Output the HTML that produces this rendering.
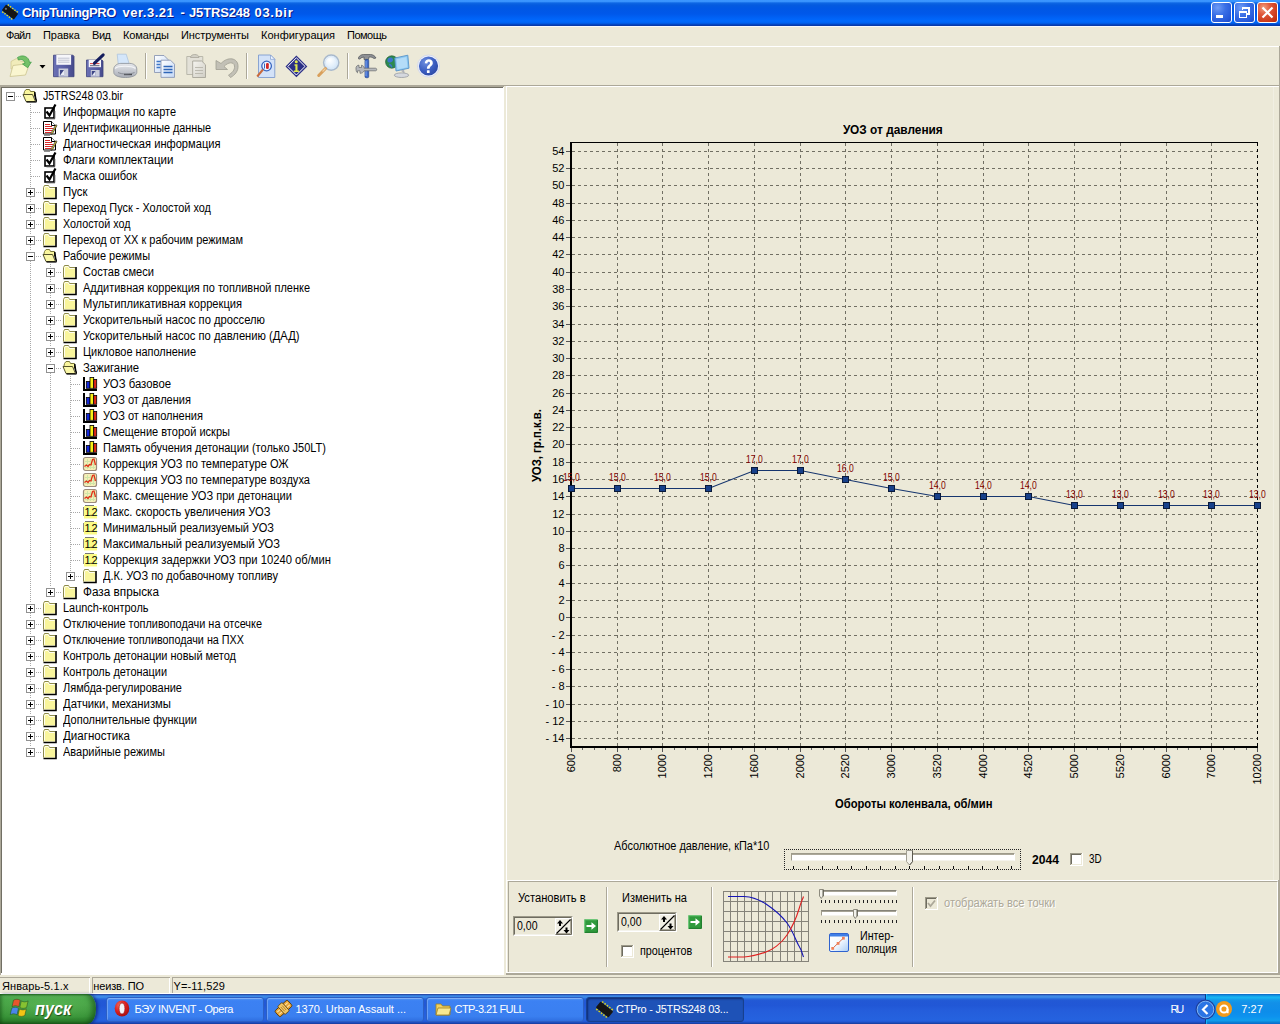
<!DOCTYPE html>
<html lang="ru"><head><meta charset="utf-8"><title>ChipTuningPRO ver.3.21 - J5TRS248 03.bir</title>
<style>
html,body{margin:0;padding:0;}
body{width:1280px;height:1024px;overflow:hidden;background:#ECE9D8;position:relative;font:11px "Liberation Sans",sans-serif;color:#000;}
.t{position:absolute;white-space:pre;line-height:14px;transform-origin:0 50%;}
.a{position:absolute;}
svg{position:absolute;overflow:visible;}
</style></head><body>
<div class="a" style="left:0;top:0;width:1280px;height:26px;background:linear-gradient(to bottom,#3b97ff 0,#3893fd 1.500px,#0d67e4 3px,#045bdf 5px,#0057e4 8px,#0058ea 14px,#0062f6 18px,#0069fd 21px,#0062f0 23px,#0346c4 24.500px,#0a349c 26px);"></div>
<svg style="left:2px;top:4px" width="16" height="16" viewBox="0 0 20 20">
<g transform="rotate(38 10 10)">
<g fill="#e6d820"><rect x="2" y="3.5" width="2" height="2"/><rect x="5.5" y="3.5" width="2" height="2"/><rect x="9" y="3.5" width="2" height="2"/><rect x="12.5" y="3.5" width="2" height="2"/><rect x="16" y="3.5" width="2" height="2"/>
<rect x="2" y="14.5" width="2" height="2"/><rect x="5.5" y="14.5" width="2" height="2"/><rect x="9" y="14.5" width="2" height="2"/><rect x="12.5" y="14.5" width="2" height="2"/><rect x="16" y="14.5" width="2" height="2"/></g>
<rect x="0.5" y="5.5" width="19" height="9" rx="1" fill="#151515"/>
<circle cx="3.5" cy="10" r="1.3" fill="#777"/></g></svg>
<span class="t" style="left:22px;top:6px;font:normal bold 13px/14px 'Liberation Sans', sans-serif;color:#fff;letter-spacing:-0.426px;text-shadow:1px 1px 0 #0a1883;">ChipTuningPRO </span>
<span class="t" style="left:122.5px;top:6px;font:normal bold 13px/14px 'Liberation Sans', sans-serif;color:#fff;letter-spacing:0.497px;text-shadow:1px 1px 0 #0a1883;">ver.3.21 </span>
<span class="t" style="left:180.5px;top:6px;font:normal bold 13px/14px 'Liberation Sans', sans-serif;color:#fff;text-shadow:1px 1px 0 #0a1883;">- </span>
<span class="t" style="left:189px;top:6px;font:normal bold 13px/14px 'Liberation Sans', sans-serif;color:#fff;letter-spacing:-0.165px;text-shadow:1px 1px 0 #0a1883;">J5TRS248 </span>
<span class="t" style="left:254.5px;top:6px;font:normal bold 13px/14px 'Liberation Sans', sans-serif;color:#fff;letter-spacing:0.702px;text-shadow:1px 1px 0 #0a1883;">03.bir</span>
<div class="a" style="left:1211px;top:2px;width:19px;height:19px;border:1px solid #fff;border-radius:3px;background:radial-gradient(circle at 30% 25%,#6f9cf5 0%,#3a6fe6 40%,#2456d8 80%,#1b46c2 100%);"></div>
<div class="a" style="left:1234px;top:2px;width:19px;height:19px;border:1px solid #fff;border-radius:3px;background:radial-gradient(circle at 30% 25%,#6f9cf5 0%,#3a6fe6 40%,#2456d8 80%,#1b46c2 100%);"></div>
<div class="a" style="left:1257px;top:2px;width:19px;height:19px;border:1px solid #fff;border-radius:3px;background:radial-gradient(circle at 30% 25%,#f0a080 0%,#e0573a 35%,#c73515 80%,#b02a0c 100%);"></div>
<div class="a" style="left:1216px;top:15px;width:7px;height:3px;background:#fff;"></div>
<svg style="left:1234px;top:2px" width="21" height="21" viewBox="0 0 21 21" fill="none" stroke="#fff" stroke-width="1.200" shape-rendering="crispEdges">
<path d="M8.500 8V5.500h6.500V12H13"/><path d="M8 6h7" stroke-width="1.600"/><rect x="5.500" y="9.500" width="7" height="6"/><path d="M5 9.500h8" stroke-width="2"/></svg>
<svg style="left:1257px;top:2px" width="21" height="21" viewBox="0 0 21 21" stroke="#fff" stroke-width="2.2" stroke-linecap="butt"><path d="M5.5 5.5l10 10M15.5 5.5l-10 10"/></svg>
<div class="a" style="left:0;top:26px;width:1280px;height:1px;background:#f6f8fc;"></div>
<span class="t" style="left:6px;top:28px;font:normal normal 11px/14px 'Liberation Sans', sans-serif;color:#000;letter-spacing:-0.682px;">Файл</span>
<span class="t" style="left:43px;top:28px;font:normal normal 11px/14px 'Liberation Sans', sans-serif;color:#000;letter-spacing:-0.034px;">Правка</span>
<span class="t" style="left:92px;top:28px;font:normal normal 11px/14px 'Liberation Sans', sans-serif;color:#000;letter-spacing:-0.453px;">Вид</span>
<span class="t" style="left:123px;top:28px;font:normal normal 11px/14px 'Liberation Sans', sans-serif;color:#000;letter-spacing:-0.102px;">Команды</span>
<span class="t" style="left:181px;top:28px;font:normal normal 11px/14px 'Liberation Sans', sans-serif;color:#000;letter-spacing:-0.059px;">Инструменты</span>
<span class="t" style="left:261px;top:28px;font:normal normal 11px/14px 'Liberation Sans', sans-serif;color:#000;letter-spacing:0.016px;">Конфигурация</span>
<span class="t" style="left:347px;top:28px;font:normal normal 11px/14px 'Liberation Sans', sans-serif;color:#000;letter-spacing:-0.500px;">Помощь</span>
<div class="a" style="left:0;top:46px;width:1279px;height:1px;background:#fff;"></div>
<div class="a" style="left:1279px;top:46px;width:1px;height:928px;background:#aca899;"></div>
<div class="a" style="left:0;top:85px;width:1280px;height:1px;background:#aca899;"></div>
<div class="a" style="left:506px;top:86px;width:773px;height:1px;background:#fff;"></div>
<div class="a" style="left:145px;top:53px;width:1px;height:26px;background:#aca899;"></div><div class="a" style="left:146px;top:53px;width:1px;height:26px;background:#fff;"></div>
<div class="a" style="left:246px;top:53px;width:1px;height:26px;background:#aca899;"></div><div class="a" style="left:247px;top:53px;width:1px;height:26px;background:#fff;"></div>
<div class="a" style="left:347px;top:53px;width:1px;height:26px;background:#aca899;"></div><div class="a" style="left:348px;top:53px;width:1px;height:26px;background:#fff;"></div>
<svg style="left:0;top:0" width="450" height="90" viewBox="0 0 450 90">
<defs>
<linearGradient id="gdoc" x1="0" y1="0" x2="1" y2="1"><stop offset="0" stop-color="#fff"/><stop offset="1" stop-color="#c4d8f6"/></linearGradient>
<linearGradient id="gdocg" x1="0" y1="0" x2="1" y2="1"><stop offset="0" stop-color="#f6f5f0"/><stop offset="1" stop-color="#cfcdc4"/></linearGradient>
<linearGradient id="gfl" x1="0" y1="0" x2="1" y2="0"><stop offset="0" stop-color="#6a70b4"/><stop offset=".5" stop-color="#5a5fa6"/><stop offset="1" stop-color="#474b8c"/></linearGradient>
<radialGradient id="ghelp" cx=".35" cy=".3" r=".8"><stop offset="0" stop-color="#6e8fe0"/><stop offset=".6" stop-color="#3a5cc0"/><stop offset="1" stop-color="#2a46a0"/></radialGradient>
<radialGradient id="glens" cx=".4" cy=".35" r=".7"><stop offset="0" stop-color="#fff"/><stop offset="1" stop-color="#cfe4f8"/></radialGradient>
<linearGradient id="gprn" x1="0" y1="0" x2="0" y2="1"><stop offset="0" stop-color="#e6e8ec"/><stop offset="1" stop-color="#a9adb6"/></linearGradient>
</defs>
<!-- open -->
<path d="M11 61.500L16.500 58.500 20.500 61l5.500 1v5l-15 2z" fill="#f1ecba" stroke="#d2ca94" stroke-width=".8"/>
<path d="M10 76.500L13 65.500l16.500-2L25.500 75z" fill="#faf6d0" stroke="#cbc48e" stroke-width=".8"/>
<path d="M17.500 57.500C22.500 54 29 56.500 29.500 62.500l1.800-.5-3.600 5.700-5.200-3.700 2.500-.7c-.5-3.300-4-4.800-6.500-3.300z" fill="#74c168" stroke="#43a04a" stroke-width=".8"/>
<path d="M39.500 65h6l-3 3.500z" fill="#000"/>
<!-- save -->
<path d="M53.500 55.200h19.500l1 1v20.500H53.500z" fill="url(#gfl)" stroke="#3e427e" stroke-width=".8"/>
<rect x="56.300" y="55" width="14.800" height="9.800" fill="#f6f6fa"/><path d="M58 58.200h11.500M58 60.200h11.500M58 62.200h11.500" stroke="#b4b6c6" stroke-width=".8"/>
<rect x="58.600" y="68.500" width="9.600" height="8.200" fill="#c9ccdb"/><rect x="60" y="70" width="4" height="5.500" fill="#3e4686"/><path d="M60 75.500l4-5.500v5.500z" fill="#e8ebf5"/>
<!-- save as -->
<path d="M86.500 60h15.500l1 1v15.700H86.500z" fill="url(#gfl)" stroke="#3e427e" stroke-width=".8"/>
<rect x="88.700" y="59.800" width="12.300" height="7.400" fill="#f6f6fa"/><path d="M90 63.600h9.500" stroke="#d43c3c" stroke-width="1"/><path d="M90 65.700h9.500" stroke="#4a4a68" stroke-width=".9"/>
<rect x="90.800" y="70" width="8.800" height="6.700" fill="#c9ccdb"/><rect x="91.800" y="71" width="3.700" height="4.700" fill="#3e4686"/><path d="M91.800 75.700l3.700-4.700v4.700z" fill="#e8ebf5"/>
<path d="M94.500 63.200L103.200 54.800" stroke="#141c5c" stroke-width="3" stroke-linecap="round"/><path d="M93.200 64.800l2.300-.6-1.600-1.600z" fill="#141c5c"/>
<!-- print -->
<path d="M117.200 54.200h9l3 9.600h-11z" fill="#d4e6fa" stroke="#a8c0dc" stroke-width=".7"/>
<path d="M113.800 69c0-3.500 4-5.600 7-5.600h9c4 0 7 2.600 7 5.600v3.500c0 3-5 5-11.500 5s-11.500-2-11.500-5z" fill="url(#gprn)" stroke="#8c9098" stroke-width=".8"/>
<path d="M115 68.500c3-3 17-3 20.500 0" fill="none" stroke="#f4f5f7" stroke-width="1.200"/>
<path d="M124 74.500h8" stroke="#4a4c52" stroke-width="1.400"/><path d="M118 72.500c4 2 12 2 16.500 0" fill="none" stroke="#7c8088" stroke-width=".8"/>
<!-- copy -->
<path d="M154.500 55.500h9.500l4 4v13h-13.500z" fill="url(#gdoc)" stroke="#8c98b4" stroke-width=".9"/><path d="M156.500 61.500h5M156.500 64.500h4M156.500 67.500h4" stroke="#3f78c8" stroke-width="1.400"/>
<path d="M161 60.200h9.500l4 4v13.200H161z" fill="url(#gdoc)" stroke="#8c98b4" stroke-width=".9"/><path d="M163.500 66.500h9M163.500 69.500h9M163.500 72.500h9" stroke="#2f66b8" stroke-width="1.500"/>
<!-- paste -->
<path d="M186.800 56.500h16v18h-16z" fill="#e3e1d8" stroke="#b4b2a6" stroke-width=".9"/><path d="M190.500 57.500c0-4 8.500-4 8.500 0z" fill="#d2d0c6" stroke="#a8a69a" stroke-width=".8"/>
<path d="M192.700 61h9l3.800 3.800v12.700h-12.800z" fill="url(#gdocg)" stroke="#a6a498" stroke-width=".9"/><path d="M195 67.500h8M195 70.500h8M195 73.500h8" stroke="#bcbab0" stroke-width="1.200"/>
<!-- undo -->
<path d="M216 60.500v9h11.500l-3.500-3c4-4.500 10-5 10.500-.5.500 4-2.500 7-6 9l2 2.500c4.500-2.500 8-6.500 7.500-12-.5-7.500-10-9.500-17-2z" fill="#c2c0b6" stroke="#a09e92" stroke-width=".8"/>
<!-- preview -->
<path d="M258.500 55h12l4.300 4.300v18.200h-16.300z" fill="#d3e2f8" stroke="#7f9ccf" stroke-width=".9"/><path d="M270.500 55v4.300h4.300z" fill="#f4f8ff" stroke="#7f9ccf" stroke-width=".7"/>
<circle cx="266.600" cy="66" r="4.800" fill="#f1f6ff" stroke="#3866c0" stroke-width="1.300"/><rect x="266" y="63" width="2.800" height="6" rx="1.200" fill="#d22a2a"/><path d="M264.500 63.500v5" stroke="#3866c0" stroke-width="1"/>
<path d="M263 69.500l-5.800 7" stroke="#c96a3c" stroke-width="2"/>
<!-- info -->
<path d="M296.400 55.500l10.900 10.900-10.900 10.900-10.900-10.900z" fill="#2b2f86"/><path d="M296.400 57.800l8.600 8.600-8.600 8.600-8.600-8.600z" fill="none" stroke="#fff" stroke-width="1"/>
<circle cx="296.300" cy="61.800" r="1.500" fill="#dfe84c"/><path d="M294.500 64.300h3v6.200h1.400v1.500h-5v-1.500h1.500v-4.700h-.9z" fill="#dfe84c"/>
<!-- find -->
<circle cx="331.200" cy="62.600" r="7.600" fill="url(#glens)" stroke="#a9b9cc" stroke-width="1.500"/><circle cx="331.200" cy="62.600" r="6" fill="none" stroke="#d8e8f8" stroke-width="1"/>
<path d="M325.500 68.500l-6.800 7" stroke="#d9a05c" stroke-width="3" stroke-linecap="round"/><path d="M325.500 68.500l-3 3" stroke="#f0cfa0" stroke-width="1.200"/>
<!-- tools -->
<path d="M358.500 57.500c1-2 3-3 5-3h7c2.500 0 4.500 1.500 5.500 3.500l-2 .5c-1.500-1.200-3-1.500-5-1.500l-.5 2.500h-4.500v-2.500l-3 .8c-.5 1.500-1.500 1.500-2.500 1z" fill="#8e9094" stroke="#4e5054" stroke-width=".7"/>
<rect x="365" y="59.500" width="3.700" height="18.200" rx="1.200" fill="#3f6ccc" stroke="#27468c" stroke-width=".7"/><path d="M366 61v15" stroke="#86aaf0" stroke-width=".9"/>
<path d="M356 69c-.5-2.500 1.500-4 3-3.800v2.300h2.500v-2.300c2 .3 2.800 2 2.500 3h11.500c1.600 0 1.600 2.600 0 2.600H364c-.5 1.500-2 2.500-4 2.500v-2.500h-2.500v2c-1-.5-1.500-2-1.500-3.800z" fill="#b6b8bc" stroke="#66686c" stroke-width=".7"/>
<!-- network -->
<circle cx="391.800" cy="62" r="6.200" fill="#2c8a50" stroke="#1c5c34" stroke-width=".7"/><path d="M388 58.500c2-1.500 4.500-1 5 .8s-1.500 3.500-3.500 3.300-2.800-2.200-1.500-4.100z" fill="#3c74cc"/><path d="M389 64.500c1.500 0 3 1.500 2.500 3" stroke="#3c74cc" stroke-width="1.500" fill="none"/>
<path d="M394.800 58l13-2.800 1.200 13-13 2.800z" fill="#8cc9f2" stroke="#5a94c8" stroke-width=".9"/><path d="M396.500 59.300l10-2.200.9 10.200-10 2.200z" fill="#b4dcf8"/>
<path d="M400.500 70.500l3.500-.8.800 4z" fill="#aeb2ba"/><ellipse cx="401.500" cy="75.200" rx="7.200" ry="2.300" fill="#d5d8de" stroke="#8d9199" stroke-width=".7"/>
<!-- help -->
<circle cx="428.500" cy="66" r="11" fill="#eef1fa" stroke="#cdd3ea" stroke-width=".8"/><circle cx="428.500" cy="66" r="9.600" fill="url(#ghelp)"/>
<path d="M424.800 63.300c0-5.300 8-5.300 8-.3 0 3-3.200 3.200-3.200 5.800h-2.700c0-3.600 3.100-3.800 3.100-5.700 0-1.800-2.700-1.800-2.700.4z" fill="#fff"/><rect x="426.900" y="70.200" width="2.700" height="2.700" rx=".5" fill="#fff"/>
</svg>
<div class="a" style="left:0;top:86px;width:504px;height:889px;background:#fff;border-left:1px solid #aca899;border-top:1px solid #aca899;box-sizing:border-box;"></div>
<div class="a" style="left:1px;top:87px;width:502px;height:1px;background:#716f64;"></div><div class="a" style="left:1px;top:87px;width:1px;height:886px;background:#716f64;"></div>
<svg width="0" height="0" style="left:0;top:0"><defs>
<symbol id="fc" viewBox="0 0 16 16"><path d="M1.500 3.500l1-2h4l1 2h6v10h-12z" fill="#f9f59c"/><path d="M1.500 13.500v-10l1-2h4l1 2h5.500" fill="none" stroke="#8c8a4c" stroke-width="1"/><path d="M2.500 12.500v-8.500l.7-1.500h3l1 2h5.300" fill="none" stroke="#fffef0" stroke-width="1"/><path d="M14 3v11.500H1.500" fill="none" stroke="#000" stroke-width="1.600"/></symbol>
<symbol id="fo" viewBox="0 0 16 16"><path d="M1.500 8l1-4.500 1.500-2h3.500l1 2h4v4.500" fill="#f9f59c" stroke="#7a783c" stroke-width="1"/><path d="M1 6.500h9.500l3 7H4z" fill="#fbf8a8" stroke="#55532c" stroke-width="1"/><path d="M12.800 4v4.500l1.700 5z" fill="#000" stroke="#000" stroke-width="1"/><path d="M4.500 14h10" stroke="#000" stroke-width="1.200"/></symbol>
<symbol id="ck" viewBox="0 0 16 16"><rect x="3" y="4" width="9" height="10" fill="#fff" stroke="#000" stroke-width="1.600"/><path d="M13 14.800H4.500M12.800 14.500V7" stroke="#555" stroke-width="1"/><path d="M4.500 7.500l3 4L13.500.5" fill="none" stroke="#000" stroke-width="2.200"/></symbol>
<symbol id="dc" viewBox="0 0 16 16"><path d="M1.500 1.500h8l4 4v8.500h-12z" fill="#fff" stroke="#000" stroke-width="1"/><path d="M9.500 1.500v4h4" fill="#fff" stroke="#000" stroke-width="1"/><path d="M3 4.500h5M3 6.500h7M3 8.500h8M3 10.500h7M3 12.500h6" stroke="#d62a2a" stroke-width="1.100"/><path d="M15 5.500l-4.500 8-1.500 1 .3-1.800 4.500-8z" fill="#f0d83c" stroke="#222" stroke-width=".7"/><path d="M2.500 15.500h6" stroke="#222" stroke-width="1" stroke-dasharray="1,1"/></symbol>
<symbol id="br" viewBox="0 0 16 16"><path d="M2 1v13h13" fill="none" stroke="#000" stroke-width="2"/><path d="M3.500 2v10.500h11.500" fill="none" stroke="#fff" stroke-width="1"/><rect x="4.300" y="5.500" width="3.700" height="6.800" fill="#1428d8" stroke="#000" stroke-width=".8"/><rect x="8" y="1.500" width="3.700" height="10.800" fill="#f8f018" stroke="#000" stroke-width=".8"/><rect x="11.700" y="3.500" width="3" height="8.800" fill="#e02818" stroke="#000" stroke-width=".8"/></symbol>
<symbol id="gr" viewBox="0 0 16 16"><rect x="1.500" y="1.500" width="13" height="13" rx="2" fill="#f6efb8" stroke="#9c8c7c" stroke-width="1.200"/><path d="M3 5.500h10M3 8.500h10M3 11.500h10M5.500 3v10M8.500 3v10M11.500 3v10" stroke="#cfe6a8" stroke-width="1"/><path d="M2.500 10.500l2-1.500 1.500 1.500 1.500-2 1.500.5 1.500-5.500 1.500-.5 1.500 6" fill="none" stroke="#e03018" stroke-width="1.300"/></symbol>
<symbol id="nm" viewBox="0 0 16 16"><rect x="2" y="2" width="13" height="12.500" fill="#fbfb86"/><path d="M3 1.500h9" stroke="#777" stroke-width="1"/><path d="M1.500 3v9" stroke="#888" stroke-width="1"/></symbol>
</defs></svg>
<div class="a" style="left:16px;top:96px;width:5px;height:1px;background:repeating-linear-gradient(to right,#a8a8a8 0 1px,transparent 1px 2px);"></div>
<svg style="left:22px;top:88px" width="16" height="16"><use href="#fo"/></svg>
<div class="a" style="left:6px;top:92px;width:7px;height:7px;border:1px solid #919191;background:#fff;"></div>
<div class="a" style="left:8px;top:96px;width:5px;height:1px;background:#000;"></div>
<span class="t" style="left:43px;top:89px;font:normal normal 12px/14px 'Liberation Sans', sans-serif;color:#000;transform:scaleX(0.8884);">J5TRS248 03.bir</span>
<div class="a" style="left:31px;top:112px;width:10px;height:1px;background:repeating-linear-gradient(to right,#a8a8a8 0 1px,transparent 1px 2px);"></div>
<svg style="left:42px;top:104px" width="16" height="16"><use href="#ck"/></svg>
<span class="t" style="left:63px;top:105px;font:normal normal 12px/14px 'Liberation Sans', sans-serif;color:#000;transform:scaleX(0.9116);">Информация по карте</span>
<div class="a" style="left:31px;top:128px;width:10px;height:1px;background:repeating-linear-gradient(to right,#a8a8a8 0 1px,transparent 1px 2px);"></div>
<svg style="left:42px;top:120px" width="16" height="16"><use href="#dc"/></svg>
<span class="t" style="left:63px;top:121px;font:normal normal 12px/14px 'Liberation Sans', sans-serif;color:#000;transform:scaleX(0.9010);">Идентификационные данные</span>
<div class="a" style="left:31px;top:144px;width:10px;height:1px;background:repeating-linear-gradient(to right,#a8a8a8 0 1px,transparent 1px 2px);"></div>
<svg style="left:42px;top:136px" width="16" height="16"><use href="#dc"/></svg>
<span class="t" style="left:63px;top:137px;font:normal normal 12px/14px 'Liberation Sans', sans-serif;color:#000;transform:scaleX(0.9272);">Диагностическая информация</span>
<div class="a" style="left:31px;top:160px;width:10px;height:1px;background:repeating-linear-gradient(to right,#a8a8a8 0 1px,transparent 1px 2px);"></div>
<svg style="left:42px;top:152px" width="16" height="16"><use href="#ck"/></svg>
<span class="t" style="left:63px;top:153px;font:normal normal 12px/14px 'Liberation Sans', sans-serif;color:#000;transform:scaleX(0.9609);">Флаги комплектации</span>
<div class="a" style="left:31px;top:176px;width:10px;height:1px;background:repeating-linear-gradient(to right,#a8a8a8 0 1px,transparent 1px 2px);"></div>
<svg style="left:42px;top:168px" width="16" height="16"><use href="#ck"/></svg>
<span class="t" style="left:63px;top:169px;font:normal normal 12px/14px 'Liberation Sans', sans-serif;color:#000;transform:scaleX(0.9234);">Маска ошибок</span>
<div class="a" style="left:36px;top:192px;width:5px;height:1px;background:repeating-linear-gradient(to right,#a8a8a8 0 1px,transparent 1px 2px);"></div>
<svg style="left:42px;top:184px" width="16" height="16"><use href="#fc"/></svg>
<div class="a" style="left:26px;top:188px;width:7px;height:7px;border:1px solid #919191;background:#fff;"></div>
<div class="a" style="left:28px;top:192px;width:5px;height:1px;background:#000;"></div>
<div class="a" style="left:30px;top:190px;width:1px;height:5px;background:#000;"></div>
<span class="t" style="left:63px;top:185px;font:normal normal 12px/14px 'Liberation Sans', sans-serif;color:#000;transform:scaleX(0.9515);">Пуск</span>
<div class="a" style="left:36px;top:208px;width:5px;height:1px;background:repeating-linear-gradient(to right,#a8a8a8 0 1px,transparent 1px 2px);"></div>
<svg style="left:42px;top:200px" width="16" height="16"><use href="#fc"/></svg>
<div class="a" style="left:26px;top:204px;width:7px;height:7px;border:1px solid #919191;background:#fff;"></div>
<div class="a" style="left:28px;top:208px;width:5px;height:1px;background:#000;"></div>
<div class="a" style="left:30px;top:206px;width:1px;height:5px;background:#000;"></div>
<span class="t" style="left:63px;top:201px;font:normal normal 12px/14px 'Liberation Sans', sans-serif;color:#000;transform:scaleX(0.9088);">Переход Пуск - Холостой ход</span>
<div class="a" style="left:36px;top:224px;width:5px;height:1px;background:repeating-linear-gradient(to right,#a8a8a8 0 1px,transparent 1px 2px);"></div>
<svg style="left:42px;top:216px" width="16" height="16"><use href="#fc"/></svg>
<div class="a" style="left:26px;top:220px;width:7px;height:7px;border:1px solid #919191;background:#fff;"></div>
<div class="a" style="left:28px;top:224px;width:5px;height:1px;background:#000;"></div>
<div class="a" style="left:30px;top:222px;width:1px;height:5px;background:#000;"></div>
<span class="t" style="left:63px;top:217px;font:normal normal 12px/14px 'Liberation Sans', sans-serif;color:#000;transform:scaleX(0.8946);">Холостой ход</span>
<div class="a" style="left:36px;top:240px;width:5px;height:1px;background:repeating-linear-gradient(to right,#a8a8a8 0 1px,transparent 1px 2px);"></div>
<svg style="left:42px;top:232px" width="16" height="16"><use href="#fc"/></svg>
<div class="a" style="left:26px;top:236px;width:7px;height:7px;border:1px solid #919191;background:#fff;"></div>
<div class="a" style="left:28px;top:240px;width:5px;height:1px;background:#000;"></div>
<div class="a" style="left:30px;top:238px;width:1px;height:5px;background:#000;"></div>
<span class="t" style="left:63px;top:233px;font:normal normal 12px/14px 'Liberation Sans', sans-serif;color:#000;transform:scaleX(0.9162);">Переход от ХХ к рабочим режимам</span>
<div class="a" style="left:36px;top:256px;width:5px;height:1px;background:repeating-linear-gradient(to right,#a8a8a8 0 1px,transparent 1px 2px);"></div>
<svg style="left:42px;top:248px" width="16" height="16"><use href="#fo"/></svg>
<div class="a" style="left:26px;top:252px;width:7px;height:7px;border:1px solid #919191;background:#fff;"></div>
<div class="a" style="left:28px;top:256px;width:5px;height:1px;background:#000;"></div>
<span class="t" style="left:63px;top:249px;font:normal normal 12px/14px 'Liberation Sans', sans-serif;color:#000;transform:scaleX(0.9125);">Рабочие режимы</span>
<div class="a" style="left:56px;top:272px;width:5px;height:1px;background:repeating-linear-gradient(to right,#a8a8a8 0 1px,transparent 1px 2px);"></div>
<svg style="left:62px;top:264px" width="16" height="16"><use href="#fc"/></svg>
<div class="a" style="left:46px;top:268px;width:7px;height:7px;border:1px solid #919191;background:#fff;"></div>
<div class="a" style="left:48px;top:272px;width:5px;height:1px;background:#000;"></div>
<div class="a" style="left:50px;top:270px;width:1px;height:5px;background:#000;"></div>
<span class="t" style="left:83px;top:265px;font:normal normal 12px/14px 'Liberation Sans', sans-serif;color:#000;transform:scaleX(0.9255);">Состав смеси</span>
<div class="a" style="left:56px;top:288px;width:5px;height:1px;background:repeating-linear-gradient(to right,#a8a8a8 0 1px,transparent 1px 2px);"></div>
<svg style="left:62px;top:280px" width="16" height="16"><use href="#fc"/></svg>
<div class="a" style="left:46px;top:284px;width:7px;height:7px;border:1px solid #919191;background:#fff;"></div>
<div class="a" style="left:48px;top:288px;width:5px;height:1px;background:#000;"></div>
<div class="a" style="left:50px;top:286px;width:1px;height:5px;background:#000;"></div>
<span class="t" style="left:83px;top:281px;font:normal normal 12px/14px 'Liberation Sans', sans-serif;color:#000;transform:scaleX(0.9135);">Аддитивная коррекция по топливной пленке</span>
<div class="a" style="left:56px;top:304px;width:5px;height:1px;background:repeating-linear-gradient(to right,#a8a8a8 0 1px,transparent 1px 2px);"></div>
<svg style="left:62px;top:296px" width="16" height="16"><use href="#fc"/></svg>
<div class="a" style="left:46px;top:300px;width:7px;height:7px;border:1px solid #919191;background:#fff;"></div>
<div class="a" style="left:48px;top:304px;width:5px;height:1px;background:#000;"></div>
<div class="a" style="left:50px;top:302px;width:1px;height:5px;background:#000;"></div>
<span class="t" style="left:83px;top:297px;font:normal normal 12px/14px 'Liberation Sans', sans-serif;color:#000;transform:scaleX(0.9264);">Мультипликативная коррекция</span>
<div class="a" style="left:56px;top:320px;width:5px;height:1px;background:repeating-linear-gradient(to right,#a8a8a8 0 1px,transparent 1px 2px);"></div>
<svg style="left:62px;top:312px" width="16" height="16"><use href="#fc"/></svg>
<div class="a" style="left:46px;top:316px;width:7px;height:7px;border:1px solid #919191;background:#fff;"></div>
<div class="a" style="left:48px;top:320px;width:5px;height:1px;background:#000;"></div>
<div class="a" style="left:50px;top:318px;width:1px;height:5px;background:#000;"></div>
<span class="t" style="left:83px;top:313px;font:normal normal 12px/14px 'Liberation Sans', sans-serif;color:#000;transform:scaleX(0.9333);">Ускорительный насос по дросселю</span>
<div class="a" style="left:56px;top:336px;width:5px;height:1px;background:repeating-linear-gradient(to right,#a8a8a8 0 1px,transparent 1px 2px);"></div>
<svg style="left:62px;top:328px" width="16" height="16"><use href="#fc"/></svg>
<div class="a" style="left:46px;top:332px;width:7px;height:7px;border:1px solid #919191;background:#fff;"></div>
<div class="a" style="left:48px;top:336px;width:5px;height:1px;background:#000;"></div>
<div class="a" style="left:50px;top:334px;width:1px;height:5px;background:#000;"></div>
<span class="t" style="left:83px;top:329px;font:normal normal 12px/14px 'Liberation Sans', sans-serif;color:#000;transform:scaleX(0.9326);">Ускорительный насос по давлению (ДАД)</span>
<div class="a" style="left:56px;top:352px;width:5px;height:1px;background:repeating-linear-gradient(to right,#a8a8a8 0 1px,transparent 1px 2px);"></div>
<svg style="left:62px;top:344px" width="16" height="16"><use href="#fc"/></svg>
<div class="a" style="left:46px;top:348px;width:7px;height:7px;border:1px solid #919191;background:#fff;"></div>
<div class="a" style="left:48px;top:352px;width:5px;height:1px;background:#000;"></div>
<div class="a" style="left:50px;top:350px;width:1px;height:5px;background:#000;"></div>
<span class="t" style="left:83px;top:345px;font:normal normal 12px/14px 'Liberation Sans', sans-serif;color:#000;transform:scaleX(0.9097);">Цикловое наполнение</span>
<div class="a" style="left:56px;top:368px;width:5px;height:1px;background:repeating-linear-gradient(to right,#a8a8a8 0 1px,transparent 1px 2px);"></div>
<svg style="left:62px;top:360px" width="16" height="16"><use href="#fo"/></svg>
<div class="a" style="left:46px;top:364px;width:7px;height:7px;border:1px solid #919191;background:#fff;"></div>
<div class="a" style="left:48px;top:368px;width:5px;height:1px;background:#000;"></div>
<span class="t" style="left:83px;top:361px;font:normal normal 12px/14px 'Liberation Sans', sans-serif;color:#000;transform:scaleX(0.9419);">Зажигание</span>
<div class="a" style="left:71px;top:384px;width:10px;height:1px;background:repeating-linear-gradient(to right,#a8a8a8 0 1px,transparent 1px 2px);"></div>
<svg style="left:82px;top:376px" width="16" height="16"><use href="#br"/></svg>
<span class="t" style="left:103px;top:377px;font:normal normal 12px/14px 'Liberation Sans', sans-serif;color:#000;transform:scaleX(0.9457);">УОЗ базовое</span>
<div class="a" style="left:71px;top:400px;width:10px;height:1px;background:repeating-linear-gradient(to right,#a8a8a8 0 1px,transparent 1px 2px);"></div>
<svg style="left:82px;top:392px" width="16" height="16"><use href="#br"/></svg>
<span class="t" style="left:103px;top:393px;font:normal normal 12px/14px 'Liberation Sans', sans-serif;color:#000;transform:scaleX(0.9198);">УОЗ от давления</span>
<div class="a" style="left:71px;top:416px;width:10px;height:1px;background:repeating-linear-gradient(to right,#a8a8a8 0 1px,transparent 1px 2px);"></div>
<svg style="left:82px;top:408px" width="16" height="16"><use href="#br"/></svg>
<span class="t" style="left:103px;top:409px;font:normal normal 12px/14px 'Liberation Sans', sans-serif;color:#000;transform:scaleX(0.9197);">УОЗ от наполнения</span>
<div class="a" style="left:71px;top:432px;width:10px;height:1px;background:repeating-linear-gradient(to right,#a8a8a8 0 1px,transparent 1px 2px);"></div>
<svg style="left:82px;top:424px" width="16" height="16"><use href="#br"/></svg>
<span class="t" style="left:103px;top:425px;font:normal normal 12px/14px 'Liberation Sans', sans-serif;color:#000;transform:scaleX(0.9195);">Смещение второй искры</span>
<div class="a" style="left:71px;top:448px;width:10px;height:1px;background:repeating-linear-gradient(to right,#a8a8a8 0 1px,transparent 1px 2px);"></div>
<svg style="left:82px;top:440px" width="16" height="16"><use href="#br"/></svg>
<span class="t" style="left:103px;top:441px;font:normal normal 12px/14px 'Liberation Sans', sans-serif;color:#000;transform:scaleX(0.9154);">Память обучения детонации (только J50LT)</span>
<div class="a" style="left:71px;top:464px;width:10px;height:1px;background:repeating-linear-gradient(to right,#a8a8a8 0 1px,transparent 1px 2px);"></div>
<svg style="left:82px;top:456px" width="16" height="16"><use href="#gr"/></svg>
<span class="t" style="left:103px;top:457px;font:normal normal 12px/14px 'Liberation Sans', sans-serif;color:#000;transform:scaleX(0.9235);">Коррекция УОЗ по температуре ОЖ</span>
<div class="a" style="left:71px;top:480px;width:10px;height:1px;background:repeating-linear-gradient(to right,#a8a8a8 0 1px,transparent 1px 2px);"></div>
<svg style="left:82px;top:472px" width="16" height="16"><use href="#gr"/></svg>
<span class="t" style="left:103px;top:473px;font:normal normal 12px/14px 'Liberation Sans', sans-serif;color:#000;transform:scaleX(0.9229);">Коррекция УОЗ по температуре воздуха</span>
<div class="a" style="left:71px;top:496px;width:10px;height:1px;background:repeating-linear-gradient(to right,#a8a8a8 0 1px,transparent 1px 2px);"></div>
<svg style="left:82px;top:488px" width="16" height="16"><use href="#gr"/></svg>
<span class="t" style="left:103px;top:489px;font:normal normal 12px/14px 'Liberation Sans', sans-serif;color:#000;transform:scaleX(0.9229);">Макс. смещение УОЗ при детонации</span>
<div class="a" style="left:71px;top:512px;width:10px;height:1px;background:repeating-linear-gradient(to right,#a8a8a8 0 1px,transparent 1px 2px);"></div>
<svg style="left:82px;top:504px" width="16" height="16"><use href="#nm"/></svg>
<span class="t" style="left:84.5px;top:505px;font:11px/14px 'Liberation Sans', sans-serif;letter-spacing:-1.100px;">1.2</span>
<span class="t" style="left:103px;top:505px;font:normal normal 12px/14px 'Liberation Sans', sans-serif;color:#000;transform:scaleX(0.9333);">Макс. скорость увеличения УОЗ</span>
<div class="a" style="left:71px;top:528px;width:10px;height:1px;background:repeating-linear-gradient(to right,#a8a8a8 0 1px,transparent 1px 2px);"></div>
<svg style="left:82px;top:520px" width="16" height="16"><use href="#nm"/></svg>
<span class="t" style="left:84.5px;top:521px;font:11px/14px 'Liberation Sans', sans-serif;letter-spacing:-1.100px;">1.2</span>
<span class="t" style="left:103px;top:521px;font:normal normal 12px/14px 'Liberation Sans', sans-serif;color:#000;transform:scaleX(0.9201);">Минимальный реализуемый УОЗ</span>
<div class="a" style="left:71px;top:544px;width:10px;height:1px;background:repeating-linear-gradient(to right,#a8a8a8 0 1px,transparent 1px 2px);"></div>
<svg style="left:82px;top:536px" width="16" height="16"><use href="#nm"/></svg>
<span class="t" style="left:84.5px;top:537px;font:11px/14px 'Liberation Sans', sans-serif;letter-spacing:-1.100px;">1.2</span>
<span class="t" style="left:103px;top:537px;font:normal normal 12px/14px 'Liberation Sans', sans-serif;color:#000;transform:scaleX(0.9281);">Максимальный реализуемый УОЗ</span>
<div class="a" style="left:71px;top:560px;width:10px;height:1px;background:repeating-linear-gradient(to right,#a8a8a8 0 1px,transparent 1px 2px);"></div>
<svg style="left:82px;top:552px" width="16" height="16"><use href="#nm"/></svg>
<span class="t" style="left:84.5px;top:553px;font:11px/14px 'Liberation Sans', sans-serif;letter-spacing:-1.100px;">1.2</span>
<span class="t" style="left:103px;top:553px;font:normal normal 12px/14px 'Liberation Sans', sans-serif;color:#000;transform:scaleX(0.9356);">Коррекция задержки УОЗ при 10240 об/мин</span>
<div class="a" style="left:76px;top:576px;width:5px;height:1px;background:repeating-linear-gradient(to right,#a8a8a8 0 1px,transparent 1px 2px);"></div>
<svg style="left:82px;top:568px" width="16" height="16"><use href="#fc"/></svg>
<div class="a" style="left:66px;top:572px;width:7px;height:7px;border:1px solid #919191;background:#fff;"></div>
<div class="a" style="left:68px;top:576px;width:5px;height:1px;background:#000;"></div>
<div class="a" style="left:70px;top:574px;width:1px;height:5px;background:#000;"></div>
<span class="t" style="left:103px;top:569px;font:normal normal 12px/14px 'Liberation Sans', sans-serif;color:#000;transform:scaleX(0.9211);">Д.К. УОЗ по добавочному топливу</span>
<div class="a" style="left:56px;top:592px;width:5px;height:1px;background:repeating-linear-gradient(to right,#a8a8a8 0 1px,transparent 1px 2px);"></div>
<svg style="left:62px;top:584px" width="16" height="16"><use href="#fc"/></svg>
<div class="a" style="left:46px;top:588px;width:7px;height:7px;border:1px solid #919191;background:#fff;"></div>
<div class="a" style="left:48px;top:592px;width:5px;height:1px;background:#000;"></div>
<div class="a" style="left:50px;top:590px;width:1px;height:5px;background:#000;"></div>
<span class="t" style="left:83px;top:585px;font:normal normal 12px/14px 'Liberation Sans', sans-serif;color:#000;transform:scaleX(0.9802);">Фаза впрыска</span>
<div class="a" style="left:36px;top:608px;width:5px;height:1px;background:repeating-linear-gradient(to right,#a8a8a8 0 1px,transparent 1px 2px);"></div>
<svg style="left:42px;top:600px" width="16" height="16"><use href="#fc"/></svg>
<div class="a" style="left:26px;top:604px;width:7px;height:7px;border:1px solid #919191;background:#fff;"></div>
<div class="a" style="left:28px;top:608px;width:5px;height:1px;background:#000;"></div>
<div class="a" style="left:30px;top:606px;width:1px;height:5px;background:#000;"></div>
<span class="t" style="left:63px;top:601px;font:normal normal 12px/14px 'Liberation Sans', sans-serif;color:#000;transform:scaleX(0.9106);">Launch-контроль</span>
<div class="a" style="left:36px;top:624px;width:5px;height:1px;background:repeating-linear-gradient(to right,#a8a8a8 0 1px,transparent 1px 2px);"></div>
<svg style="left:42px;top:616px" width="16" height="16"><use href="#fc"/></svg>
<div class="a" style="left:26px;top:620px;width:7px;height:7px;border:1px solid #919191;background:#fff;"></div>
<div class="a" style="left:28px;top:624px;width:5px;height:1px;background:#000;"></div>
<div class="a" style="left:30px;top:622px;width:1px;height:5px;background:#000;"></div>
<span class="t" style="left:63px;top:617px;font:normal normal 12px/14px 'Liberation Sans', sans-serif;color:#000;transform:scaleX(0.9087);">Отключение топливоподачи на отсечке</span>
<div class="a" style="left:36px;top:640px;width:5px;height:1px;background:repeating-linear-gradient(to right,#a8a8a8 0 1px,transparent 1px 2px);"></div>
<svg style="left:42px;top:632px" width="16" height="16"><use href="#fc"/></svg>
<div class="a" style="left:26px;top:636px;width:7px;height:7px;border:1px solid #919191;background:#fff;"></div>
<div class="a" style="left:28px;top:640px;width:5px;height:1px;background:#000;"></div>
<div class="a" style="left:30px;top:638px;width:1px;height:5px;background:#000;"></div>
<span class="t" style="left:63px;top:633px;font:normal normal 12px/14px 'Liberation Sans', sans-serif;color:#000;transform:scaleX(0.8994);">Отключение топливоподачи на ПХХ</span>
<div class="a" style="left:36px;top:656px;width:5px;height:1px;background:repeating-linear-gradient(to right,#a8a8a8 0 1px,transparent 1px 2px);"></div>
<svg style="left:42px;top:648px" width="16" height="16"><use href="#fc"/></svg>
<div class="a" style="left:26px;top:652px;width:7px;height:7px;border:1px solid #919191;background:#fff;"></div>
<div class="a" style="left:28px;top:656px;width:5px;height:1px;background:#000;"></div>
<div class="a" style="left:30px;top:654px;width:1px;height:5px;background:#000;"></div>
<span class="t" style="left:63px;top:649px;font:normal normal 12px/14px 'Liberation Sans', sans-serif;color:#000;transform:scaleX(0.9138);">Контроль детонации новый метод</span>
<div class="a" style="left:36px;top:672px;width:5px;height:1px;background:repeating-linear-gradient(to right,#a8a8a8 0 1px,transparent 1px 2px);"></div>
<svg style="left:42px;top:664px" width="16" height="16"><use href="#fc"/></svg>
<div class="a" style="left:26px;top:668px;width:7px;height:7px;border:1px solid #919191;background:#fff;"></div>
<div class="a" style="left:28px;top:672px;width:5px;height:1px;background:#000;"></div>
<div class="a" style="left:30px;top:670px;width:1px;height:5px;background:#000;"></div>
<span class="t" style="left:63px;top:665px;font:normal normal 12px/14px 'Liberation Sans', sans-serif;color:#000;transform:scaleX(0.9094);">Контроль детонации</span>
<div class="a" style="left:36px;top:688px;width:5px;height:1px;background:repeating-linear-gradient(to right,#a8a8a8 0 1px,transparent 1px 2px);"></div>
<svg style="left:42px;top:680px" width="16" height="16"><use href="#fc"/></svg>
<div class="a" style="left:26px;top:684px;width:7px;height:7px;border:1px solid #919191;background:#fff;"></div>
<div class="a" style="left:28px;top:688px;width:5px;height:1px;background:#000;"></div>
<div class="a" style="left:30px;top:686px;width:1px;height:5px;background:#000;"></div>
<span class="t" style="left:63px;top:681px;font:normal normal 12px/14px 'Liberation Sans', sans-serif;color:#000;transform:scaleX(0.9158);">Лямбда-регулирование</span>
<div class="a" style="left:36px;top:704px;width:5px;height:1px;background:repeating-linear-gradient(to right,#a8a8a8 0 1px,transparent 1px 2px);"></div>
<svg style="left:42px;top:696px" width="16" height="16"><use href="#fc"/></svg>
<div class="a" style="left:26px;top:700px;width:7px;height:7px;border:1px solid #919191;background:#fff;"></div>
<div class="a" style="left:28px;top:704px;width:5px;height:1px;background:#000;"></div>
<div class="a" style="left:30px;top:702px;width:1px;height:5px;background:#000;"></div>
<span class="t" style="left:63px;top:697px;font:normal normal 12px/14px 'Liberation Sans', sans-serif;color:#000;transform:scaleX(0.9431);">Датчики, механизмы</span>
<div class="a" style="left:36px;top:720px;width:5px;height:1px;background:repeating-linear-gradient(to right,#a8a8a8 0 1px,transparent 1px 2px);"></div>
<svg style="left:42px;top:712px" width="16" height="16"><use href="#fc"/></svg>
<div class="a" style="left:26px;top:716px;width:7px;height:7px;border:1px solid #919191;background:#fff;"></div>
<div class="a" style="left:28px;top:720px;width:5px;height:1px;background:#000;"></div>
<div class="a" style="left:30px;top:718px;width:1px;height:5px;background:#000;"></div>
<span class="t" style="left:63px;top:713px;font:normal normal 12px/14px 'Liberation Sans', sans-serif;color:#000;transform:scaleX(0.9163);">Дополнительные функции</span>
<div class="a" style="left:36px;top:736px;width:5px;height:1px;background:repeating-linear-gradient(to right,#a8a8a8 0 1px,transparent 1px 2px);"></div>
<svg style="left:42px;top:728px" width="16" height="16"><use href="#fc"/></svg>
<div class="a" style="left:26px;top:732px;width:7px;height:7px;border:1px solid #919191;background:#fff;"></div>
<div class="a" style="left:28px;top:736px;width:5px;height:1px;background:#000;"></div>
<div class="a" style="left:30px;top:734px;width:1px;height:5px;background:#000;"></div>
<span class="t" style="left:63px;top:729px;font:normal normal 12px/14px 'Liberation Sans', sans-serif;color:#000;transform:scaleX(0.9629);">Диагностика</span>
<div class="a" style="left:36px;top:752px;width:5px;height:1px;background:repeating-linear-gradient(to right,#a8a8a8 0 1px,transparent 1px 2px);"></div>
<svg style="left:42px;top:744px" width="16" height="16"><use href="#fc"/></svg>
<div class="a" style="left:26px;top:748px;width:7px;height:7px;border:1px solid #919191;background:#fff;"></div>
<div class="a" style="left:28px;top:752px;width:5px;height:1px;background:#000;"></div>
<div class="a" style="left:30px;top:750px;width:1px;height:5px;background:#000;"></div>
<span class="t" style="left:63px;top:745px;font:normal normal 12px/14px 'Liberation Sans', sans-serif;color:#000;transform:scaleX(0.9183);">Аварийные режимы</span>
<div class="a" style="left:30px;top:104px;width:1px;height:83px;background:repeating-linear-gradient(to bottom,#a8a8a8 0 1px,transparent 1px 2px);"></div>
<div class="a" style="left:30px;top:197px;width:1px;height:6px;background:repeating-linear-gradient(to bottom,#a8a8a8 0 1px,transparent 1px 2px);"></div>
<div class="a" style="left:30px;top:213px;width:1px;height:6px;background:repeating-linear-gradient(to bottom,#a8a8a8 0 1px,transparent 1px 2px);"></div>
<div class="a" style="left:30px;top:229px;width:1px;height:6px;background:repeating-linear-gradient(to bottom,#a8a8a8 0 1px,transparent 1px 2px);"></div>
<div class="a" style="left:30px;top:245px;width:1px;height:6px;background:repeating-linear-gradient(to bottom,#a8a8a8 0 1px,transparent 1px 2px);"></div>
<div class="a" style="left:30px;top:261px;width:1px;height:342px;background:repeating-linear-gradient(to bottom,#a8a8a8 0 1px,transparent 1px 2px);"></div>
<div class="a" style="left:30px;top:613px;width:1px;height:6px;background:repeating-linear-gradient(to bottom,#a8a8a8 0 1px,transparent 1px 2px);"></div>
<div class="a" style="left:30px;top:629px;width:1px;height:6px;background:repeating-linear-gradient(to bottom,#a8a8a8 0 1px,transparent 1px 2px);"></div>
<div class="a" style="left:30px;top:645px;width:1px;height:6px;background:repeating-linear-gradient(to bottom,#a8a8a8 0 1px,transparent 1px 2px);"></div>
<div class="a" style="left:30px;top:661px;width:1px;height:6px;background:repeating-linear-gradient(to bottom,#a8a8a8 0 1px,transparent 1px 2px);"></div>
<div class="a" style="left:30px;top:677px;width:1px;height:6px;background:repeating-linear-gradient(to bottom,#a8a8a8 0 1px,transparent 1px 2px);"></div>
<div class="a" style="left:30px;top:693px;width:1px;height:6px;background:repeating-linear-gradient(to bottom,#a8a8a8 0 1px,transparent 1px 2px);"></div>
<div class="a" style="left:30px;top:709px;width:1px;height:6px;background:repeating-linear-gradient(to bottom,#a8a8a8 0 1px,transparent 1px 2px);"></div>
<div class="a" style="left:30px;top:725px;width:1px;height:6px;background:repeating-linear-gradient(to bottom,#a8a8a8 0 1px,transparent 1px 2px);"></div>
<div class="a" style="left:30px;top:741px;width:1px;height:6px;background:repeating-linear-gradient(to bottom,#a8a8a8 0 1px,transparent 1px 2px);"></div>
<div class="a" style="left:50px;top:264px;width:1px;height:3px;background:repeating-linear-gradient(to bottom,#a8a8a8 0 1px,transparent 1px 2px);"></div>
<div class="a" style="left:50px;top:277px;width:1px;height:6px;background:repeating-linear-gradient(to bottom,#a8a8a8 0 1px,transparent 1px 2px);"></div>
<div class="a" style="left:50px;top:293px;width:1px;height:6px;background:repeating-linear-gradient(to bottom,#a8a8a8 0 1px,transparent 1px 2px);"></div>
<div class="a" style="left:50px;top:309px;width:1px;height:6px;background:repeating-linear-gradient(to bottom,#a8a8a8 0 1px,transparent 1px 2px);"></div>
<div class="a" style="left:50px;top:325px;width:1px;height:6px;background:repeating-linear-gradient(to bottom,#a8a8a8 0 1px,transparent 1px 2px);"></div>
<div class="a" style="left:50px;top:341px;width:1px;height:6px;background:repeating-linear-gradient(to bottom,#a8a8a8 0 1px,transparent 1px 2px);"></div>
<div class="a" style="left:50px;top:357px;width:1px;height:6px;background:repeating-linear-gradient(to bottom,#a8a8a8 0 1px,transparent 1px 2px);"></div>
<div class="a" style="left:50px;top:373px;width:1px;height:214px;background:repeating-linear-gradient(to bottom,#a8a8a8 0 1px,transparent 1px 2px);"></div>
<div class="a" style="left:70px;top:376px;width:1px;height:195px;background:repeating-linear-gradient(to bottom,#a8a8a8 0 1px,transparent 1px 2px);"></div>
<div class="a" style="left:506px;top:87px;width:1px;height:886px;background:#fff;"></div>
<div class="a" style="left:1273px;top:87px;width:1px;height:793px;background:#f1efe3;"></div>
<svg style="left:0;top:0" width="1280" height="1024" viewBox="0 0 1280 1024" shape-rendering="crispEdges"><path d="M572 738.5 H1257" stroke="#716f63" stroke-width="1" stroke-dasharray="3,3" fill="none"/><path d="M566 738.5 H570" stroke="#555" stroke-width="1"/><path d="M572 721.5 H1257" stroke="#716f63" stroke-width="1" stroke-dasharray="3,3" fill="none"/><path d="M566 721.5 H570" stroke="#555" stroke-width="1"/><path d="M572 704.5 H1257" stroke="#716f63" stroke-width="1" stroke-dasharray="3,3" fill="none"/><path d="M566 704.5 H570" stroke="#555" stroke-width="1"/><path d="M572 686.5 H1257" stroke="#716f63" stroke-width="1" stroke-dasharray="3,3" fill="none"/><path d="M566 686.5 H570" stroke="#555" stroke-width="1"/><path d="M572 669.5 H1257" stroke="#716f63" stroke-width="1" stroke-dasharray="3,3" fill="none"/><path d="M566 669.5 H570" stroke="#555" stroke-width="1"/><path d="M572 652.5 H1257" stroke="#716f63" stroke-width="1" stroke-dasharray="3,3" fill="none"/><path d="M566 652.5 H570" stroke="#555" stroke-width="1"/><path d="M572 635.5 H1257" stroke="#716f63" stroke-width="1" stroke-dasharray="3,3" fill="none"/><path d="M566 635.5 H570" stroke="#555" stroke-width="1"/><path d="M572 617.5 H1257" stroke="#716f63" stroke-width="1" stroke-dasharray="3,3" fill="none"/><path d="M566 617.5 H570" stroke="#555" stroke-width="1"/><path d="M572 600.5 H1257" stroke="#716f63" stroke-width="1" stroke-dasharray="3,3" fill="none"/><path d="M566 600.5 H570" stroke="#555" stroke-width="1"/><path d="M572 583.5 H1257" stroke="#716f63" stroke-width="1" stroke-dasharray="3,3" fill="none"/><path d="M566 583.5 H570" stroke="#555" stroke-width="1"/><path d="M572 565.5 H1257" stroke="#716f63" stroke-width="1" stroke-dasharray="3,3" fill="none"/><path d="M566 565.5 H570" stroke="#555" stroke-width="1"/><path d="M572 548.5 H1257" stroke="#716f63" stroke-width="1" stroke-dasharray="3,3" fill="none"/><path d="M566 548.5 H570" stroke="#555" stroke-width="1"/><path d="M572 531.5 H1257" stroke="#716f63" stroke-width="1" stroke-dasharray="3,3" fill="none"/><path d="M566 531.5 H570" stroke="#555" stroke-width="1"/><path d="M572 514.5 H1257" stroke="#716f63" stroke-width="1" stroke-dasharray="3,3" fill="none"/><path d="M566 514.5 H570" stroke="#555" stroke-width="1"/><path d="M572 496.5 H1257" stroke="#716f63" stroke-width="1" stroke-dasharray="3,3" fill="none"/><path d="M566 496.5 H570" stroke="#555" stroke-width="1"/><path d="M572 479.5 H1257" stroke="#716f63" stroke-width="1" stroke-dasharray="3,3" fill="none"/><path d="M566 479.5 H570" stroke="#555" stroke-width="1"/><path d="M572 462.5 H1257" stroke="#716f63" stroke-width="1" stroke-dasharray="3,3" fill="none"/><path d="M566 462.5 H570" stroke="#555" stroke-width="1"/><path d="M572 444.5 H1257" stroke="#716f63" stroke-width="1" stroke-dasharray="3,3" fill="none"/><path d="M566 444.5 H570" stroke="#555" stroke-width="1"/><path d="M572 427.5 H1257" stroke="#716f63" stroke-width="1" stroke-dasharray="3,3" fill="none"/><path d="M566 427.5 H570" stroke="#555" stroke-width="1"/><path d="M572 410.5 H1257" stroke="#716f63" stroke-width="1" stroke-dasharray="3,3" fill="none"/><path d="M566 410.5 H570" stroke="#555" stroke-width="1"/><path d="M572 393.5 H1257" stroke="#716f63" stroke-width="1" stroke-dasharray="3,3" fill="none"/><path d="M566 393.5 H570" stroke="#555" stroke-width="1"/><path d="M572 375.5 H1257" stroke="#716f63" stroke-width="1" stroke-dasharray="3,3" fill="none"/><path d="M566 375.5 H570" stroke="#555" stroke-width="1"/><path d="M572 358.5 H1257" stroke="#716f63" stroke-width="1" stroke-dasharray="3,3" fill="none"/><path d="M566 358.5 H570" stroke="#555" stroke-width="1"/><path d="M572 341.5 H1257" stroke="#716f63" stroke-width="1" stroke-dasharray="3,3" fill="none"/><path d="M566 341.5 H570" stroke="#555" stroke-width="1"/><path d="M572 324.5 H1257" stroke="#716f63" stroke-width="1" stroke-dasharray="3,3" fill="none"/><path d="M566 324.5 H570" stroke="#555" stroke-width="1"/><path d="M572 306.5 H1257" stroke="#716f63" stroke-width="1" stroke-dasharray="3,3" fill="none"/><path d="M566 306.5 H570" stroke="#555" stroke-width="1"/><path d="M572 289.5 H1257" stroke="#716f63" stroke-width="1" stroke-dasharray="3,3" fill="none"/><path d="M566 289.5 H570" stroke="#555" stroke-width="1"/><path d="M572 272.5 H1257" stroke="#716f63" stroke-width="1" stroke-dasharray="3,3" fill="none"/><path d="M566 272.5 H570" stroke="#555" stroke-width="1"/><path d="M572 254.5 H1257" stroke="#716f63" stroke-width="1" stroke-dasharray="3,3" fill="none"/><path d="M566 254.5 H570" stroke="#555" stroke-width="1"/><path d="M572 237.5 H1257" stroke="#716f63" stroke-width="1" stroke-dasharray="3,3" fill="none"/><path d="M566 237.5 H570" stroke="#555" stroke-width="1"/><path d="M572 220.5 H1257" stroke="#716f63" stroke-width="1" stroke-dasharray="3,3" fill="none"/><path d="M566 220.5 H570" stroke="#555" stroke-width="1"/><path d="M572 203.5 H1257" stroke="#716f63" stroke-width="1" stroke-dasharray="3,3" fill="none"/><path d="M566 203.5 H570" stroke="#555" stroke-width="1"/><path d="M572 185.5 H1257" stroke="#716f63" stroke-width="1" stroke-dasharray="3,3" fill="none"/><path d="M566 185.5 H570" stroke="#555" stroke-width="1"/><path d="M572 168.5 H1257" stroke="#716f63" stroke-width="1" stroke-dasharray="3,3" fill="none"/><path d="M566 168.5 H570" stroke="#555" stroke-width="1"/><path d="M572 151.5 H1257" stroke="#716f63" stroke-width="1" stroke-dasharray="3,3" fill="none"/><path d="M566 151.5 H570" stroke="#555" stroke-width="1"/><path d="M617.5 143 V746" stroke="#716f63" stroke-width="1" stroke-dasharray="3,3" fill="none"/><path d="M662.5 143 V746" stroke="#716f63" stroke-width="1" stroke-dasharray="3,3" fill="none"/><path d="M708.5 143 V746" stroke="#716f63" stroke-width="1" stroke-dasharray="3,3" fill="none"/><path d="M754.5 143 V746" stroke="#716f63" stroke-width="1" stroke-dasharray="3,3" fill="none"/><path d="M800.5 143 V746" stroke="#716f63" stroke-width="1" stroke-dasharray="3,3" fill="none"/><path d="M845.5 143 V746" stroke="#716f63" stroke-width="1" stroke-dasharray="3,3" fill="none"/><path d="M891.5 143 V746" stroke="#716f63" stroke-width="1" stroke-dasharray="3,3" fill="none"/><path d="M937.5 143 V746" stroke="#716f63" stroke-width="1" stroke-dasharray="3,3" fill="none"/><path d="M983.5 143 V746" stroke="#716f63" stroke-width="1" stroke-dasharray="3,3" fill="none"/><path d="M1028.5 143 V746" stroke="#716f63" stroke-width="1" stroke-dasharray="3,3" fill="none"/><path d="M1074.5 143 V746" stroke="#716f63" stroke-width="1" stroke-dasharray="3,3" fill="none"/><path d="M1120.5 143 V746" stroke="#716f63" stroke-width="1" stroke-dasharray="3,3" fill="none"/><path d="M1166.5 143 V746" stroke="#716f63" stroke-width="1" stroke-dasharray="3,3" fill="none"/><path d="M1211.5 143 V746" stroke="#716f63" stroke-width="1" stroke-dasharray="3,3" fill="none"/><path d="M1257.5 143 V746" stroke="#000" stroke-width="1" stroke-dasharray="3,3"/><rect x="570" y="142" width="2" height="606" fill="#000"/><rect x="570" y="746" width="688" height="2" fill="#000"/><rect x="570" y="142" width="688" height="1" fill="#000"/><path d="M571.5 748 V752" stroke="#555" stroke-width="1"/><path d="M582.5 748 V750" stroke="#666" stroke-width="1"/><path d="M594.5 748 V750" stroke="#666" stroke-width="1"/><path d="M605.5 748 V750" stroke="#666" stroke-width="1"/><path d="M617.5 748 V752" stroke="#555" stroke-width="1"/><path d="M628.5 748 V750" stroke="#666" stroke-width="1"/><path d="M640.5 748 V750" stroke="#666" stroke-width="1"/><path d="M651.5 748 V750" stroke="#666" stroke-width="1"/><path d="M662.5 748 V752" stroke="#555" stroke-width="1"/><path d="M674.5 748 V750" stroke="#666" stroke-width="1"/><path d="M685.5 748 V750" stroke="#666" stroke-width="1"/><path d="M697.5 748 V750" stroke="#666" stroke-width="1"/><path d="M708.5 748 V752" stroke="#555" stroke-width="1"/><path d="M720.5 748 V750" stroke="#666" stroke-width="1"/><path d="M731.5 748 V750" stroke="#666" stroke-width="1"/><path d="M742.5 748 V750" stroke="#666" stroke-width="1"/><path d="M754.5 748 V752" stroke="#555" stroke-width="1"/><path d="M765.5 748 V750" stroke="#666" stroke-width="1"/><path d="M777.5 748 V750" stroke="#666" stroke-width="1"/><path d="M788.5 748 V750" stroke="#666" stroke-width="1"/><path d="M800.5 748 V752" stroke="#555" stroke-width="1"/><path d="M811.5 748 V750" stroke="#666" stroke-width="1"/><path d="M823.5 748 V750" stroke="#666" stroke-width="1"/><path d="M834.5 748 V750" stroke="#666" stroke-width="1"/><path d="M845.5 748 V752" stroke="#555" stroke-width="1"/><path d="M857.5 748 V750" stroke="#666" stroke-width="1"/><path d="M868.5 748 V750" stroke="#666" stroke-width="1"/><path d="M880.5 748 V750" stroke="#666" stroke-width="1"/><path d="M891.5 748 V752" stroke="#555" stroke-width="1"/><path d="M903.5 748 V750" stroke="#666" stroke-width="1"/><path d="M914.5 748 V750" stroke="#666" stroke-width="1"/><path d="M925.5 748 V750" stroke="#666" stroke-width="1"/><path d="M937.5 748 V752" stroke="#555" stroke-width="1"/><path d="M948.5 748 V750" stroke="#666" stroke-width="1"/><path d="M960.5 748 V750" stroke="#666" stroke-width="1"/><path d="M971.5 748 V750" stroke="#666" stroke-width="1"/><path d="M983.5 748 V752" stroke="#555" stroke-width="1"/><path d="M994.5 748 V750" stroke="#666" stroke-width="1"/><path d="M1005.5 748 V750" stroke="#666" stroke-width="1"/><path d="M1017.5 748 V750" stroke="#666" stroke-width="1"/><path d="M1028.5 748 V752" stroke="#555" stroke-width="1"/><path d="M1040.5 748 V750" stroke="#666" stroke-width="1"/><path d="M1051.5 748 V750" stroke="#666" stroke-width="1"/><path d="M1063.5 748 V750" stroke="#666" stroke-width="1"/><path d="M1074.5 748 V752" stroke="#555" stroke-width="1"/><path d="M1086.5 748 V750" stroke="#666" stroke-width="1"/><path d="M1097.5 748 V750" stroke="#666" stroke-width="1"/><path d="M1108.5 748 V750" stroke="#666" stroke-width="1"/><path d="M1120.5 748 V752" stroke="#555" stroke-width="1"/><path d="M1131.5 748 V750" stroke="#666" stroke-width="1"/><path d="M1143.5 748 V750" stroke="#666" stroke-width="1"/><path d="M1154.5 748 V750" stroke="#666" stroke-width="1"/><path d="M1166.5 748 V752" stroke="#555" stroke-width="1"/><path d="M1177.5 748 V750" stroke="#666" stroke-width="1"/><path d="M1188.5 748 V750" stroke="#666" stroke-width="1"/><path d="M1200.5 748 V750" stroke="#666" stroke-width="1"/><path d="M1211.5 748 V752" stroke="#555" stroke-width="1"/><path d="M1223.5 748 V750" stroke="#666" stroke-width="1"/><path d="M1234.5 748 V750" stroke="#666" stroke-width="1"/><path d="M1246.5 748 V750" stroke="#666" stroke-width="1"/><path d="M1257.5 748 V752" stroke="#555" stroke-width="1"/></svg>
<svg style="left:0;top:0" width="1280" height="1024" viewBox="0 0 1280 1024"><polyline points="571.5,488.5 617.5,488.5 662.5,488.5 708.5,488.5 754.5,470.5 800.5,470.5 845.5,479.5 891.5,488.5 937.5,496.5 983.5,496.5 1028.5,496.5 1074.5,505.5 1120.5,505.5 1166.5,505.5 1211.5,505.5 1257.5,505.5" fill="none" stroke="#16356e" stroke-width="1.1"/><rect x="568" y="485" width="7" height="7" fill="#0a1a3a" shape-rendering="crispEdges"/><rect x="569" y="486" width="5" height="5" fill="#17408a" shape-rendering="crispEdges"/><rect x="614" y="485" width="7" height="7" fill="#0a1a3a" shape-rendering="crispEdges"/><rect x="615" y="486" width="5" height="5" fill="#17408a" shape-rendering="crispEdges"/><rect x="659" y="485" width="7" height="7" fill="#0a1a3a" shape-rendering="crispEdges"/><rect x="660" y="486" width="5" height="5" fill="#17408a" shape-rendering="crispEdges"/><rect x="705" y="485" width="7" height="7" fill="#0a1a3a" shape-rendering="crispEdges"/><rect x="706" y="486" width="5" height="5" fill="#17408a" shape-rendering="crispEdges"/><rect x="751" y="467" width="7" height="7" fill="#0a1a3a" shape-rendering="crispEdges"/><rect x="752" y="468" width="5" height="5" fill="#17408a" shape-rendering="crispEdges"/><rect x="797" y="467" width="7" height="7" fill="#0a1a3a" shape-rendering="crispEdges"/><rect x="798" y="468" width="5" height="5" fill="#17408a" shape-rendering="crispEdges"/><rect x="842" y="476" width="7" height="7" fill="#0a1a3a" shape-rendering="crispEdges"/><rect x="843" y="477" width="5" height="5" fill="#17408a" shape-rendering="crispEdges"/><rect x="888" y="485" width="7" height="7" fill="#0a1a3a" shape-rendering="crispEdges"/><rect x="889" y="486" width="5" height="5" fill="#17408a" shape-rendering="crispEdges"/><rect x="934" y="493" width="7" height="7" fill="#0a1a3a" shape-rendering="crispEdges"/><rect x="935" y="494" width="5" height="5" fill="#17408a" shape-rendering="crispEdges"/><rect x="980" y="493" width="7" height="7" fill="#0a1a3a" shape-rendering="crispEdges"/><rect x="981" y="494" width="5" height="5" fill="#17408a" shape-rendering="crispEdges"/><rect x="1025" y="493" width="7" height="7" fill="#0a1a3a" shape-rendering="crispEdges"/><rect x="1026" y="494" width="5" height="5" fill="#17408a" shape-rendering="crispEdges"/><rect x="1071" y="502" width="7" height="7" fill="#0a1a3a" shape-rendering="crispEdges"/><rect x="1072" y="503" width="5" height="5" fill="#17408a" shape-rendering="crispEdges"/><rect x="1117" y="502" width="7" height="7" fill="#0a1a3a" shape-rendering="crispEdges"/><rect x="1118" y="503" width="5" height="5" fill="#17408a" shape-rendering="crispEdges"/><rect x="1163" y="502" width="7" height="7" fill="#0a1a3a" shape-rendering="crispEdges"/><rect x="1164" y="503" width="5" height="5" fill="#17408a" shape-rendering="crispEdges"/><rect x="1208" y="502" width="7" height="7" fill="#0a1a3a" shape-rendering="crispEdges"/><rect x="1209" y="503" width="5" height="5" fill="#17408a" shape-rendering="crispEdges"/><rect x="1254" y="502" width="7" height="7" fill="#0a1a3a" shape-rendering="crispEdges"/><rect x="1255" y="503" width="5" height="5" fill="#17408a" shape-rendering="crispEdges"/></svg>
<span class="t" style="left:563.3px;top:470px;font:normal normal 10.5px/14px 'Liberation Sans', sans-serif;color:#800000;transform:scaleX(0.8171);">15,0</span>
<span class="t" style="left:609.3px;top:470px;font:normal normal 10.5px/14px 'Liberation Sans', sans-serif;color:#800000;transform:scaleX(0.8171);">15,0</span>
<span class="t" style="left:654.3px;top:470px;font:normal normal 10.5px/14px 'Liberation Sans', sans-serif;color:#800000;transform:scaleX(0.8171);">15,0</span>
<span class="t" style="left:700.3px;top:470px;font:normal normal 10.5px/14px 'Liberation Sans', sans-serif;color:#800000;transform:scaleX(0.8171);">15,0</span>
<span class="t" style="left:746.3px;top:452px;font:normal normal 10.5px/14px 'Liberation Sans', sans-serif;color:#800000;transform:scaleX(0.8171);">17,0</span>
<span class="t" style="left:792.3px;top:452px;font:normal normal 10.5px/14px 'Liberation Sans', sans-serif;color:#800000;transform:scaleX(0.8171);">17,0</span>
<span class="t" style="left:837.3px;top:461px;font:normal normal 10.5px/14px 'Liberation Sans', sans-serif;color:#800000;transform:scaleX(0.8171);">16,0</span>
<span class="t" style="left:883.3px;top:470px;font:normal normal 10.5px/14px 'Liberation Sans', sans-serif;color:#800000;transform:scaleX(0.8171);">15,0</span>
<span class="t" style="left:929.3px;top:478px;font:normal normal 10.5px/14px 'Liberation Sans', sans-serif;color:#800000;transform:scaleX(0.8171);">14,0</span>
<span class="t" style="left:975.3px;top:478px;font:normal normal 10.5px/14px 'Liberation Sans', sans-serif;color:#800000;transform:scaleX(0.8171);">14,0</span>
<span class="t" style="left:1020.3px;top:478px;font:normal normal 10.5px/14px 'Liberation Sans', sans-serif;color:#800000;transform:scaleX(0.8171);">14,0</span>
<span class="t" style="left:1066.3px;top:487px;font:normal normal 10.5px/14px 'Liberation Sans', sans-serif;color:#800000;transform:scaleX(0.8171);">13,0</span>
<span class="t" style="left:1112.3px;top:487px;font:normal normal 10.5px/14px 'Liberation Sans', sans-serif;color:#800000;transform:scaleX(0.8171);">13,0</span>
<span class="t" style="left:1158.3px;top:487px;font:normal normal 10.5px/14px 'Liberation Sans', sans-serif;color:#800000;transform:scaleX(0.8171);">13,0</span>
<span class="t" style="left:1203.3px;top:487px;font:normal normal 10.5px/14px 'Liberation Sans', sans-serif;color:#800000;transform:scaleX(0.8171);">13,0</span>
<span class="t" style="left:1249.3px;top:487px;font:normal normal 10.5px/14px 'Liberation Sans', sans-serif;color:#800000;transform:scaleX(0.8171);">13,0</span>
<span class="t" style="left:514.500px;top:731px;width:50px;text-align:right;font:11px/14px 'Liberation Sans', sans-serif;">- 14</span>
<span class="t" style="left:514.500px;top:714px;width:50px;text-align:right;font:11px/14px 'Liberation Sans', sans-serif;">- 12</span>
<span class="t" style="left:514.500px;top:697px;width:50px;text-align:right;font:11px/14px 'Liberation Sans', sans-serif;">- 10</span>
<span class="t" style="left:514.500px;top:679px;width:50px;text-align:right;font:11px/14px 'Liberation Sans', sans-serif;">- 8</span>
<span class="t" style="left:514.500px;top:662px;width:50px;text-align:right;font:11px/14px 'Liberation Sans', sans-serif;">- 6</span>
<span class="t" style="left:514.500px;top:645px;width:50px;text-align:right;font:11px/14px 'Liberation Sans', sans-serif;">- 4</span>
<span class="t" style="left:514.500px;top:628px;width:50px;text-align:right;font:11px/14px 'Liberation Sans', sans-serif;">- 2</span>
<span class="t" style="left:514.500px;top:610px;width:50px;text-align:right;font:11px/14px 'Liberation Sans', sans-serif;">0</span>
<span class="t" style="left:514.500px;top:593px;width:50px;text-align:right;font:11px/14px 'Liberation Sans', sans-serif;">2</span>
<span class="t" style="left:514.500px;top:576px;width:50px;text-align:right;font:11px/14px 'Liberation Sans', sans-serif;">4</span>
<span class="t" style="left:514.500px;top:558px;width:50px;text-align:right;font:11px/14px 'Liberation Sans', sans-serif;">6</span>
<span class="t" style="left:514.500px;top:541px;width:50px;text-align:right;font:11px/14px 'Liberation Sans', sans-serif;">8</span>
<span class="t" style="left:514.500px;top:524px;width:50px;text-align:right;font:11px/14px 'Liberation Sans', sans-serif;">10</span>
<span class="t" style="left:514.500px;top:507px;width:50px;text-align:right;font:11px/14px 'Liberation Sans', sans-serif;">12</span>
<span class="t" style="left:514.500px;top:489px;width:50px;text-align:right;font:11px/14px 'Liberation Sans', sans-serif;">14</span>
<span class="t" style="left:514.500px;top:472px;width:50px;text-align:right;font:11px/14px 'Liberation Sans', sans-serif;">16</span>
<span class="t" style="left:514.500px;top:455px;width:50px;text-align:right;font:11px/14px 'Liberation Sans', sans-serif;">18</span>
<span class="t" style="left:514.500px;top:437px;width:50px;text-align:right;font:11px/14px 'Liberation Sans', sans-serif;">20</span>
<span class="t" style="left:514.500px;top:420px;width:50px;text-align:right;font:11px/14px 'Liberation Sans', sans-serif;">22</span>
<span class="t" style="left:514.500px;top:403px;width:50px;text-align:right;font:11px/14px 'Liberation Sans', sans-serif;">24</span>
<span class="t" style="left:514.500px;top:386px;width:50px;text-align:right;font:11px/14px 'Liberation Sans', sans-serif;">26</span>
<span class="t" style="left:514.500px;top:368px;width:50px;text-align:right;font:11px/14px 'Liberation Sans', sans-serif;">28</span>
<span class="t" style="left:514.500px;top:351px;width:50px;text-align:right;font:11px/14px 'Liberation Sans', sans-serif;">30</span>
<span class="t" style="left:514.500px;top:334px;width:50px;text-align:right;font:11px/14px 'Liberation Sans', sans-serif;">32</span>
<span class="t" style="left:514.500px;top:317px;width:50px;text-align:right;font:11px/14px 'Liberation Sans', sans-serif;">34</span>
<span class="t" style="left:514.500px;top:299px;width:50px;text-align:right;font:11px/14px 'Liberation Sans', sans-serif;">36</span>
<span class="t" style="left:514.500px;top:282px;width:50px;text-align:right;font:11px/14px 'Liberation Sans', sans-serif;">38</span>
<span class="t" style="left:514.500px;top:265px;width:50px;text-align:right;font:11px/14px 'Liberation Sans', sans-serif;">40</span>
<span class="t" style="left:514.500px;top:247px;width:50px;text-align:right;font:11px/14px 'Liberation Sans', sans-serif;">42</span>
<span class="t" style="left:514.500px;top:230px;width:50px;text-align:right;font:11px/14px 'Liberation Sans', sans-serif;">44</span>
<span class="t" style="left:514.500px;top:213px;width:50px;text-align:right;font:11px/14px 'Liberation Sans', sans-serif;">46</span>
<span class="t" style="left:514.500px;top:196px;width:50px;text-align:right;font:11px/14px 'Liberation Sans', sans-serif;">48</span>
<span class="t" style="left:514.500px;top:178px;width:50px;text-align:right;font:11px/14px 'Liberation Sans', sans-serif;">50</span>
<span class="t" style="left:514.500px;top:161px;width:50px;text-align:right;font:11px/14px 'Liberation Sans', sans-serif;">52</span>
<span class="t" style="left:514.500px;top:144px;width:50px;text-align:right;font:11px/14px 'Liberation Sans', sans-serif;">54</span>
<span class="t" style="left:564px;top:773px;font:11px/14px 'Liberation Sans', sans-serif;transform-origin:0 0;transform:rotate(-90deg);width:19px;text-align:right;">600</span>
<span class="t" style="left:610px;top:773px;font:11px/14px 'Liberation Sans', sans-serif;transform-origin:0 0;transform:rotate(-90deg);width:19px;text-align:right;">800</span>
<span class="t" style="left:655px;top:780px;font:11px/14px 'Liberation Sans', sans-serif;transform-origin:0 0;transform:rotate(-90deg);width:26px;text-align:right;">1000</span>
<span class="t" style="left:701px;top:780px;font:11px/14px 'Liberation Sans', sans-serif;transform-origin:0 0;transform:rotate(-90deg);width:26px;text-align:right;">1200</span>
<span class="t" style="left:747px;top:780px;font:11px/14px 'Liberation Sans', sans-serif;transform-origin:0 0;transform:rotate(-90deg);width:26px;text-align:right;">1600</span>
<span class="t" style="left:793px;top:780px;font:11px/14px 'Liberation Sans', sans-serif;transform-origin:0 0;transform:rotate(-90deg);width:26px;text-align:right;">2000</span>
<span class="t" style="left:838px;top:780px;font:11px/14px 'Liberation Sans', sans-serif;transform-origin:0 0;transform:rotate(-90deg);width:26px;text-align:right;">2520</span>
<span class="t" style="left:884px;top:780px;font:11px/14px 'Liberation Sans', sans-serif;transform-origin:0 0;transform:rotate(-90deg);width:26px;text-align:right;">3000</span>
<span class="t" style="left:930px;top:780px;font:11px/14px 'Liberation Sans', sans-serif;transform-origin:0 0;transform:rotate(-90deg);width:26px;text-align:right;">3520</span>
<span class="t" style="left:976px;top:780px;font:11px/14px 'Liberation Sans', sans-serif;transform-origin:0 0;transform:rotate(-90deg);width:26px;text-align:right;">4000</span>
<span class="t" style="left:1021px;top:780px;font:11px/14px 'Liberation Sans', sans-serif;transform-origin:0 0;transform:rotate(-90deg);width:26px;text-align:right;">4520</span>
<span class="t" style="left:1067px;top:780px;font:11px/14px 'Liberation Sans', sans-serif;transform-origin:0 0;transform:rotate(-90deg);width:26px;text-align:right;">5000</span>
<span class="t" style="left:1113px;top:780px;font:11px/14px 'Liberation Sans', sans-serif;transform-origin:0 0;transform:rotate(-90deg);width:26px;text-align:right;">5520</span>
<span class="t" style="left:1159px;top:780px;font:11px/14px 'Liberation Sans', sans-serif;transform-origin:0 0;transform:rotate(-90deg);width:26px;text-align:right;">6000</span>
<span class="t" style="left:1204px;top:780px;font:11px/14px 'Liberation Sans', sans-serif;transform-origin:0 0;transform:rotate(-90deg);width:26px;text-align:right;">7000</span>
<span class="t" style="left:1250px;top:786px;font:11px/14px 'Liberation Sans', sans-serif;transform-origin:0 0;transform:rotate(-90deg);width:32px;text-align:right;">10200</span>
<span class="t" style="left:842.5px;top:123px;font:normal bold 12px/14px 'Liberation Sans', sans-serif;color:#000;transform:scaleX(0.9893);">УОЗ от давления</span>
<span class="t" style="left:834.8px;top:797px;font:normal bold 12px/14px 'Liberation Sans', sans-serif;color:#000;transform:scaleX(0.9341);">Обороты коленвала, об/мин</span>
<span class="t" style="left:530px;top:481.500px;font:bold 12px/14px 'Liberation Sans', sans-serif;transform-origin:0 0;transform:rotate(-90deg) scaleX(.948);">УОЗ, гр.п.к.в.</span>
<span class="t" style="left:614px;top:839px;font:normal normal 12px/14px 'Liberation Sans', sans-serif;color:#000;transform:scaleX(0.9107);">Абсолютное давление, кПа*10</span>
<div class="a" style="left:784px;top:849px;width:237px;height:21px;border:1px dotted #222;box-sizing:border-box;"></div>
<div class="a" style="left:791px;top:853px;width:224px;height:8px;box-sizing:border-box;background:#fff;border:1px solid;border-color:#9d9a8a #fff #f4f3ec #9d9a8a;"></div>
<div class="a" style="left:792px;top:854px;width:222px;height:1px;background:#aca899;"></div>
<svg style="left:906px;top:850px" width="8" height="16" viewBox="0 0 8 16"><path d="M.5.500h6v11L3.500 15 .5 11.500z" fill="#f2f1ea" stroke="#a09e92"/><path d="M6.500.5v11.200L3.700 15" fill="none" stroke="#5c5a50"/></svg>
<svg style="left:793px;top:866px" width="230" height="3" shape-rendering="crispEdges"><rect x="0" y="0" width="1" height="3" fill="#111"/><rect x="15" y="0" width="1" height="3" fill="#111"/><rect x="29" y="0" width="1" height="3" fill="#111"/><rect x="44" y="0" width="1" height="3" fill="#111"/><rect x="58" y="0" width="1" height="3" fill="#111"/><rect x="73" y="0" width="1" height="3" fill="#111"/><rect x="87" y="0" width="1" height="3" fill="#111"/><rect x="102" y="0" width="1" height="3" fill="#111"/><rect x="116" y="0" width="1" height="3" fill="#111"/><rect x="131" y="0" width="1" height="3" fill="#111"/><rect x="146" y="0" width="1" height="3" fill="#111"/><rect x="160" y="0" width="1" height="3" fill="#111"/><rect x="175" y="0" width="1" height="3" fill="#111"/><rect x="189" y="0" width="1" height="3" fill="#111"/><rect x="204" y="0" width="1" height="3" fill="#111"/><rect x="218" y="0" width="1" height="3" fill="#111"/></svg>
<span class="t" style="left:1032px;top:853px;font:normal bold 12px/14px 'Liberation Sans', sans-serif;color:#000;transform:scaleX(1.0111);">2044</span>
<svg style="left:1070px;top:853px" width="13" height="13" viewBox="0 0 13 13" shape-rendering="crispEdges"><rect x="0" y="0" width="13" height="13" fill="#fff"/><path d="M0 12.500h13M12.500 0v13" stroke="#fff"/><path d="M1 11.500h11M11.500 1v11" stroke="#ECE9D8"/><path d="M0 .5h12M.5 0v12" stroke="#9d9a8a"/><path d="M1 1.500h10M1.500 1v10" stroke="#6e6c60"/></svg>
<span class="t" style="left:1088.6px;top:852px;font:normal normal 12px/14px 'Liberation Sans', sans-serif;color:#000;transform:scaleX(0.8212);">3D</span>
<div class="a" style="left:507px;top:880px;width:772px;height:1px;background:#fff;"></div>
<div class="a" style="left:508px;top:881px;width:770px;height:91px;box-sizing:border-box;border-top:1px solid #aca899;border-left:1px solid #aca899;border-right:1px solid #fff;"></div>
<div class="a" style="left:507px;top:972px;width:772px;height:1px;background:#fff;"></div>
<div class="a" style="left:506px;top:973px;width:774px;height:2px;background:#aca899;"></div>
<div class="a" style="left:1278px;top:880px;width:2px;height:94px;background:#aca899;"></div>
<div class="a" style="left:606px;top:887px;width:1px;height:80px;background:#aca899;"></div><div class="a" style="left:607px;top:887px;width:1px;height:80px;background:#fff;"></div>
<div class="a" style="left:711px;top:887px;width:1px;height:80px;background:#aca899;"></div><div class="a" style="left:712px;top:887px;width:1px;height:80px;background:#fff;"></div>
<div class="a" style="left:912px;top:887px;width:1px;height:80px;background:#aca899;"></div><div class="a" style="left:913px;top:887px;width:1px;height:80px;background:#fff;"></div>
<span class="t" style="left:518px;top:891px;font:normal normal 12px/14px 'Liberation Sans', sans-serif;color:#000;transform:scaleX(0.9312);">Установить в</span>
<span class="t" style="left:621.8px;top:891px;font:normal normal 12px/14px 'Liberation Sans', sans-serif;color:#000;transform:scaleX(0.9185);">Изменить на</span>
<div class="a" style="left:513px;top:916px;width:60px;height:20px;box-sizing:border-box;border:1px solid;border-color:#9d9a8a #fff #fff #9d9a8a;background:#ECE9D8;"></div>
<div class="a" style="left:514px;top:917px;width:58px;height:18px;box-sizing:border-box;border:1px solid;border-color:#6e6c60 #f4f3ec #f4f3ec #6e6c60;"></div>
<svg style="left:555px;top:918px" width="17" height="17" viewBox="0 0 17 17"><rect x="0" y="0" width="17" height="17" fill="#f2f0e6"/><path d="M.5 16.500V.5h16" fill="none" stroke="#fff"/><path d="M16.500.5v16H.5" fill="none" stroke="#6e6c60"/><path d="M15.500 1.500v14H1.500" fill="none" stroke="#aca899"/>
<path d="M1.500 15.500L15.500 1.500" stroke="#000" stroke-width="1.100"/><path d="M5 2L2 5.500h2V8h2V5.500h2z" fill="#000"/><path d="M11.500 15.500l-3-3.500h2V9.500h2V12h2z" fill="#000"/></svg>
<span class="t" style="left:516.7px;top:919px;font:normal normal 12px/14px 'Liberation Sans', sans-serif;color:#000;transform:scaleX(0.8776);">0,00</span>
<div class="a" style="left:617px;top:912px;width:60px;height:20px;box-sizing:border-box;border:1px solid;border-color:#9d9a8a #fff #fff #9d9a8a;background:#ECE9D8;"></div>
<div class="a" style="left:618px;top:913px;width:58px;height:18px;box-sizing:border-box;border:1px solid;border-color:#6e6c60 #f4f3ec #f4f3ec #6e6c60;"></div>
<svg style="left:659px;top:914px" width="17" height="17" viewBox="0 0 17 17"><rect x="0" y="0" width="17" height="17" fill="#f2f0e6"/><path d="M.5 16.500V.5h16" fill="none" stroke="#fff"/><path d="M16.500.5v16H.5" fill="none" stroke="#6e6c60"/><path d="M15.500 1.500v14H1.500" fill="none" stroke="#aca899"/>
<path d="M1.500 15.500L15.500 1.500" stroke="#000" stroke-width="1.100"/><path d="M5 2L2 5.500h2V8h2V5.500h2z" fill="#000"/><path d="M11.500 15.500l-3-3.500h2V9.500h2V12h2z" fill="#000"/></svg>
<span class="t" style="left:620.7px;top:915px;font:normal normal 12px/14px 'Liberation Sans', sans-serif;color:#000;transform:scaleX(0.8776);">0,00</span>
<svg style="left:584px;top:919px" width="14" height="14" viewBox="0 0 14 14"><rect x="0" y="0" width="14" height="14" rx="1.500" fill="#2f9a3c"/><path d="M.7 13V1.200Q.7.7 1.200.7H13" fill="none" stroke="#7fd088" stroke-width="1"/><path d="M13.300 1v12.300H1" fill="none" stroke="#1f7a2c" stroke-width="1"/>
<path d="M2.500 6h5V3.200L12 7l-4.500 3.800V8h-5z" fill="#fff"/></svg>
<svg style="left:688px;top:915px" width="14" height="14" viewBox="0 0 14 14"><rect x="0" y="0" width="14" height="14" rx="1.500" fill="#2f9a3c"/><path d="M.7 13V1.200Q.7.7 1.200.7H13" fill="none" stroke="#7fd088" stroke-width="1"/><path d="M13.300 1v12.300H1" fill="none" stroke="#1f7a2c" stroke-width="1"/>
<path d="M2.500 6h5V3.200L12 7l-4.500 3.800V8h-5z" fill="#fff"/></svg>
<svg style="left:621px;top:945px" width="13" height="13" viewBox="0 0 13 13" shape-rendering="crispEdges"><rect x="0" y="0" width="13" height="13" fill="#fff"/><path d="M0 12.500h13M12.500 0v13" stroke="#fff"/><path d="M1 11.500h11M11.500 1v11" stroke="#ECE9D8"/><path d="M0 .5h12M.5 0v12" stroke="#9d9a8a"/><path d="M1 1.500h10M1.500 1v10" stroke="#6e6c60"/></svg>
<span class="t" style="left:639.7px;top:944px;font:normal normal 12px/14px 'Liberation Sans', sans-serif;color:#000;transform:scaleX(0.8971);">процентов</span>
<svg style="left:723px;top:891px" width="86" height="72" viewBox="0 0 86 72"><path d="M0.5 0V71M7.5 0V71M14.5 0V71M21.5 0V71M28.5 0V71M35.5 0V71M42.5 0V71M49.5 0V71M57.5 0V71M64.5 0V71M71.5 0V71M78.5 0V71M85.5 0V71M0 0.5H85.500M0 10.5H85.500M0 20.5H85.500M0 30.5H85.500M0 40.5H85.500M0 50.5H85.500M0 60.5H85.500M0 70.5H85.500" stroke="#85837a" stroke-width="1" fill="none" shape-rendering="crispEdges"/><path d="M5 5.500H21C30 6 37 9 43 13S58 24 64 32 73 50 76 55 79 62 80.500 66" fill="none" stroke="#1414b4" stroke-width="1.100"/><path d="M5 66H21C30 65.500 37 63 43 61S58 53 64 44 73 28 76 18 79 10 80.500 5.500" fill="none" stroke="#e02020" stroke-width="1.100"/></svg>
<div class="a" style="left:821px;top:890px;width:76px;height:6px;box-sizing:border-box;background:#fff;border:1px solid;border-color:#858378 #fff #f4f3ec #9d9a8a;"></div>
<div class="a" style="left:822px;top:891px;width:74px;height:1px;background:#a6a395;"></div>
<svg style="left:821px;top:900px" width="78" height="4" shape-rendering="crispEdges"><rect x="0" y="0" width="1" height="3" fill="#222"/><rect x="4" y="0" width="1" height="3" fill="#222"/><rect x="8" y="0" width="1" height="3" fill="#222"/><rect x="13" y="0" width="1" height="3" fill="#222"/><rect x="17" y="0" width="1" height="3" fill="#222"/><rect x="21" y="0" width="1" height="3" fill="#222"/><rect x="25" y="0" width="1" height="3" fill="#222"/><rect x="29" y="0" width="1" height="3" fill="#222"/><rect x="34" y="0" width="1" height="3" fill="#222"/><rect x="38" y="0" width="1" height="3" fill="#222"/><rect x="42" y="0" width="1" height="3" fill="#222"/><rect x="46" y="0" width="1" height="3" fill="#222"/><rect x="50" y="0" width="1" height="3" fill="#222"/><rect x="54" y="0" width="1" height="3" fill="#222"/><rect x="59" y="0" width="1" height="3" fill="#222"/><rect x="63" y="0" width="1" height="3" fill="#222"/><rect x="67" y="0" width="1" height="3" fill="#222"/><rect x="71" y="0" width="1" height="3" fill="#222"/><rect x="75" y="0" width="1" height="3" fill="#222"/></svg>
<svg style="left:819px;top:889px" width="5" height="10" viewBox="0 0 5 10"><path d="M.5.500h3.500v6.500L2.250 9.500.5 7z" fill="#f2f1ea" stroke="#8d8b7e"/><path d="M4.300.5v6.800" stroke="#5c5a50"/></svg>
<div class="a" style="left:821px;top:910px;width:76px;height:6px;box-sizing:border-box;background:#fff;border:1px solid;border-color:#858378 #fff #f4f3ec #9d9a8a;"></div>
<div class="a" style="left:822px;top:911px;width:74px;height:1px;background:#a6a395;"></div>
<svg style="left:821px;top:920px" width="78" height="4" shape-rendering="crispEdges"><rect x="0" y="0" width="1" height="3" fill="#222"/><rect x="4" y="0" width="1" height="3" fill="#222"/><rect x="8" y="0" width="1" height="3" fill="#222"/><rect x="13" y="0" width="1" height="3" fill="#222"/><rect x="17" y="0" width="1" height="3" fill="#222"/><rect x="21" y="0" width="1" height="3" fill="#222"/><rect x="25" y="0" width="1" height="3" fill="#222"/><rect x="29" y="0" width="1" height="3" fill="#222"/><rect x="34" y="0" width="1" height="3" fill="#222"/><rect x="38" y="0" width="1" height="3" fill="#222"/><rect x="42" y="0" width="1" height="3" fill="#222"/><rect x="46" y="0" width="1" height="3" fill="#222"/><rect x="50" y="0" width="1" height="3" fill="#222"/><rect x="54" y="0" width="1" height="3" fill="#222"/><rect x="59" y="0" width="1" height="3" fill="#222"/><rect x="63" y="0" width="1" height="3" fill="#222"/><rect x="67" y="0" width="1" height="3" fill="#222"/><rect x="71" y="0" width="1" height="3" fill="#222"/><rect x="75" y="0" width="1" height="3" fill="#222"/></svg>
<svg style="left:853px;top:909px" width="5" height="10" viewBox="0 0 5 10"><path d="M.5.500h3.500v6.500L2.250 9.500.5 7z" fill="#f2f1ea" stroke="#8d8b7e"/><path d="M4.300.5v6.800" stroke="#5c5a50"/></svg>
<svg style="left:829px;top:933px" width="20" height="19" viewBox="0 0 20 19"><defs><linearGradient id="gint" x1="0" y1="0" x2="1" y2="1"><stop offset="0" stop-color="#fff"/><stop offset=".5" stop-color="#f4f9ff"/><stop offset="1" stop-color="#a9cdf6"/></linearGradient></defs><rect x=".5" y=".5" width="19" height="18" rx="1.500" fill="url(#gint)" stroke="#2f63cf"/><rect x="1" y="1" width="18" height="2.500" fill="#3f7ee6"/>
<path d="M3.500 15.500L14.500 5" stroke="#d86a4c" stroke-width="1"/><rect x="2.300" y="14" width="2.800" height="2.800" fill="#f08058"/><rect x="7.700" y="9" width="2.800" height="2.800" fill="#f08058"/><rect x="13" y="3.800" width="2.800" height="2.800" fill="#f08058"/></svg>
<span class="t" style="left:859.6px;top:929px;font:normal normal 12px/14px 'Liberation Sans', sans-serif;color:#000;transform:scaleX(0.8902);">Интер-</span>
<span class="t" style="left:856px;top:942px;font:normal normal 12px/14px 'Liberation Sans', sans-serif;color:#000;transform:scaleX(0.8820);">поляция</span>
<svg style="left:925px;top:897px" width="13" height="13" viewBox="0 0 13 13" shape-rendering="crispEdges"><rect x="0" y="0" width="13" height="13" fill="#ECE9D8"/><path d="M0 12.500h13M12.500 0v13" stroke="#fff"/><path d="M0 .5h12M.5 0v12" stroke="#9d9a8a"/><path d="M1 1.500h10M1.500 1v10" stroke="#6e6c60"/><path d="M3 6l2.500 3L10 3.500" fill="none" stroke="#aca899" stroke-width="1.800" shape-rendering="auto"/></svg>
<span class="t" style="left:943.7px;top:896px;font:normal normal 12px/14px 'Liberation Sans', sans-serif;color:#aca899;transform:scaleX(0.9243);text-shadow:1px 1px 0 #fff;">отображать все точки</span>
<div class="a" style="left:0;top:976px;width:1280px;height:18px;background:#ECE9D8;"></div>
<div class="a" style="left:0;top:977px;width:1280px;height:1px;background:#aca899;"></div>
<div class="a" style="left:0;top:993px;width:1280px;height:1px;background:#fff;"></div>
<div class="a" style="left:89px;top:978px;width:1px;height:15px;background:#fff;"></div><div class="a" style="left:90px;top:977px;width:2px;height:16px;background:#ECE9D8;"></div><div class="a" style="left:92px;top:977px;width:1px;height:16px;background:#aca899;"></div>
<div class="a" style="left:169px;top:978px;width:1px;height:15px;background:#fff;"></div><div class="a" style="left:170px;top:977px;width:2px;height:16px;background:#ECE9D8;"></div><div class="a" style="left:172px;top:977px;width:1px;height:16px;background:#aca899;"></div>
<span class="t" style="left:2px;top:979px;font:normal normal 11px/14px 'Liberation Sans', sans-serif;color:#000;letter-spacing:0.107px;">Январь-5.1.x</span>
<span class="t" style="left:93.2px;top:979px;font:normal normal 11px/14px 'Liberation Sans', sans-serif;color:#000;letter-spacing:-0.127px;">неизв. ПО</span>
<span class="t" style="left:173.4px;top:979px;font:normal normal 11px/14px 'Liberation Sans', sans-serif;color:#000;letter-spacing:0.167px;">Y=-11,529</span>
<div class="a" style="left:0;top:994px;width:1280px;height:30px;background:linear-gradient(to bottom,#1f2f86 0,#3165c4 3%,#3682e5 6%,#4490e6 10%,#3883e5 12%,#2b71e0 15%,#2663da 18%,#235bd6 20%,#2258d5 23%,#2157d6 38%,#245ddb 54%,#2562df 86%,#245fdc 89%,#2158d4 92%,#1d4ec0 95%,#1941a5 98%);"></div>
<div class="a" style="left:0;top:994px;width:96px;height:30px;border-radius:0 9px 9px 0/0 14px 14px 0;background:radial-gradient(ellipse 70px 14px at 50px 12px,rgba(110,200,100,.55),rgba(110,200,100,0) 100%),linear-gradient(to bottom,#2c7e2c 0,#55b055 7%,#46a446 18%,#3b963b 45%,#379237 75%,#2d822d 90%,#226a22 100%);box-shadow:inset -4px 0 5px rgba(0,40,0,.4),inset 2px 0 3px rgba(0,40,0,.3),2px 0 3px rgba(0,0,60,.45);"></div>
<svg style="left:10px;top:998px" width="20" height="20" viewBox="0 0 20 20"><g stroke="#1f4a1f" stroke-width=".5"><path d="M3.500 2.200c2.300-1.300 4.600-1.200 6.800.1L8.800 8.800c-2.200-1.300-4.400-1.400-6.800-.1z" fill="#e8552c"/><path d="M11.300 2.900c2.200 1.300 4.500 1.300 6.800 0l-1.500 6.500c-2.300 1.300-4.600 1.300-6.800 0z" fill="#86c232"/>
<path d="M1.700 10.200c2.400-1.300 4.600-1.200 6.800.1L7 16.800c-2.200-1.300-4.400-1.400-6.800-.1z" fill="#4a86ec"/><path d="M9.500 10.900c2.200 1.300 4.500 1.300 6.800 0l-1.500 6.500c-2.300 1.300-4.600 1.300-6.800 0z" fill="#f4c414"/></g></svg>
<span class="t" style="left:34.7px;top:1002px;font:italic bold 19px/14px 'Liberation Sans', sans-serif;color:#fff;transform:scaleX(0.8566);text-shadow:1px 1px 1px #1a4a1a;">пуск</span>
<div class="a" style="left:106px;top:997px;width:158px;height:25px;box-sizing:border-box;border-radius:3px;background:linear-gradient(to bottom,#5a98f4 0,#3c81f3 12%,#3a7ff0 80%,#2f6fe0 100%);border:1px solid #2c5fc4;box-shadow:inset 1px 1px 0 rgba(255,255,255,.25);"></div>
<span class="t" style="left:134.6px;top:1002px;font:normal normal 11px/14px 'Liberation Sans', sans-serif;color:#fff;letter-spacing:-0.396px;">БЭУ INVENT - Opera</span>
<div class="a" style="left:266px;top:997px;width:158px;height:25px;box-sizing:border-box;border-radius:3px;background:linear-gradient(to bottom,#5a98f4 0,#3c81f3 12%,#3a7ff0 80%,#2f6fe0 100%);border:1px solid #2c5fc4;box-shadow:inset 1px 1px 0 rgba(255,255,255,.25);"></div>
<span class="t" style="left:295.5px;top:1002px;font:normal normal 11px/14px 'Liberation Sans', sans-serif;color:#fff;letter-spacing:-0.036px;">1370. Urban Assault ...</span>
<div class="a" style="left:426px;top:997px;width:158px;height:25px;box-sizing:border-box;border-radius:3px;background:linear-gradient(to bottom,#5a98f4 0,#3c81f3 12%,#3a7ff0 80%,#2f6fe0 100%);border:1px solid #2c5fc4;box-shadow:inset 1px 1px 0 rgba(255,255,255,.25);"></div>
<span class="t" style="left:454.6px;top:1002px;font:normal normal 11px/14px 'Liberation Sans', sans-serif;color:#fff;letter-spacing:-0.586px;">CTP-3.21 FULL</span>
<div class="a" style="left:586px;top:997px;width:158px;height:25px;box-sizing:border-box;border-radius:3px;background:#1e52b7;border:1px solid #17408e;box-shadow:inset 1px 1px 2px rgba(0,0,40,.5);"></div>
<span class="t" style="left:616px;top:1002px;font:normal normal 11px/14px 'Liberation Sans', sans-serif;color:#fff;letter-spacing:-0.262px;">CTPro - J5TRS248 03...</span>
<svg style="left:114px;top:1000px" width="16" height="17" viewBox="0 0 16 17"><defs><radialGradient id="gop" cx=".35" cy=".3" r=".8"><stop offset="0" stop-color="#f46a5a"/><stop offset=".5" stop-color="#dc2020"/><stop offset="1" stop-color="#9c0c0c"/></radialGradient></defs><ellipse cx="8" cy="8.500" rx="7.300" ry="8" fill="url(#gop)"/><ellipse cx="8" cy="8.500" rx="2.900" ry="5.600" fill="#f4f4f8"/><ellipse cx="8" cy="8.500" rx="2.900" ry="5.600" fill="none" stroke="#8c1010" stroke-width=".6"/></svg>
<svg style="left:275px;top:1000px" width="17" height="17" viewBox="0 0 17 17"><g transform="rotate(-42 8.500 8.500)"><rect x="0" y="4.500" width="17" height="8" rx="1.500" fill="#e9a63a" stroke="#5a3c0c" stroke-width=".9"/><path d="M1.500 7h14M1.500 10h14" stroke="#fbe6a8" stroke-width="1.100"/><rect x="5.500" y="3" width="6" height="11" rx="1" fill="#f2c868" stroke="#5a3c0c" stroke-width=".8"/><path d="M7.500 5.500v6M9.500 5.500v6" stroke="#a8741c" stroke-width=".8"/></g></svg>
<svg style="left:435px;top:1002px" width="16" height="14" viewBox="0 0 16 14"><path d="M1 2h5l1.500 2H15v9H1z" fill="#f0d060" stroke="#a08020" stroke-width=".8"/><path d="M1 13l2-7h13l-2 7z" fill="#f8e890" stroke="#a08020" stroke-width=".8"/></svg>
<svg style="left:596px;top:1001px" width="17" height="17" viewBox="0 0 20 20"><g transform="rotate(38 10 10)"><g fill="#d8d020"><rect x="2" y="3.500" width="2" height="2"/><rect x="5.500" y="3.500" width="2" height="2"/><rect x="9" y="3.500" width="2" height="2"/><rect x="12.500" y="3.500" width="2" height="2"/><rect x="16" y="3.500" width="2" height="2"/>
<rect x="2" y="14.500" width="2" height="2"/><rect x="5.500" y="14.500" width="2" height="2"/><rect x="9" y="14.500" width="2" height="2"/><rect x="12.500" y="14.500" width="2" height="2"/><rect x="16" y="14.500" width="2" height="2"/></g><rect x=".5" y="5.500" width="19" height="9" rx="1" fill="#151515"/></g></svg>
<div class="a" style="left:1205px;top:994px;width:75px;height:30px;background:linear-gradient(to bottom,#0c59b9 0,#139ee9 6%,#18b5f2 12%,#139beb 20%,#1290e8 30%,#0d8dea 60%,#0d92ee 75%,#0f9eed 88%,#0b7fd2 95%,#095bc9 100%);border-left:1px solid #0a3c8c;box-shadow:inset 1px 0 1px #18bbff;"></div>
<span class="t" style="left:1170.6px;top:1002px;font:normal normal 11px/14px 'Liberation Sans', sans-serif;color:#fff;letter-spacing:-2.191px;">RU</span>
<svg style="left:1195px;top:999px" width="21" height="21" viewBox="0 0 21 21"><circle cx="10.500" cy="10.500" r="9.300" fill="#2a74e4" stroke="#1c3f9c" stroke-width="1.400"/><circle cx="10.500" cy="10.500" r="8.300" fill="none" stroke="#7fb4f4" stroke-width="1"/><path d="M12.500 6l-4.500 4.500 4.500 4.500" fill="none" stroke="#fff" stroke-width="2.200"/></svg>
<svg style="left:1216px;top:1001px" width="16" height="16" viewBox="0 0 16 16"><circle cx="8" cy="8" r="8" fill="#f29a1c"/><circle cx="8" cy="8" r="3.600" fill="none" stroke="#fff" stroke-width="2"/><path d="M11.600 8v4.200" stroke="#fff" stroke-width="2"/></svg>
<span class="t" style="left:1241.2px;top:1002px;font:normal normal 11px/14px 'Liberation Sans', sans-serif;color:#fff;letter-spacing:0.126px;">7:27</span>
</body></html>
